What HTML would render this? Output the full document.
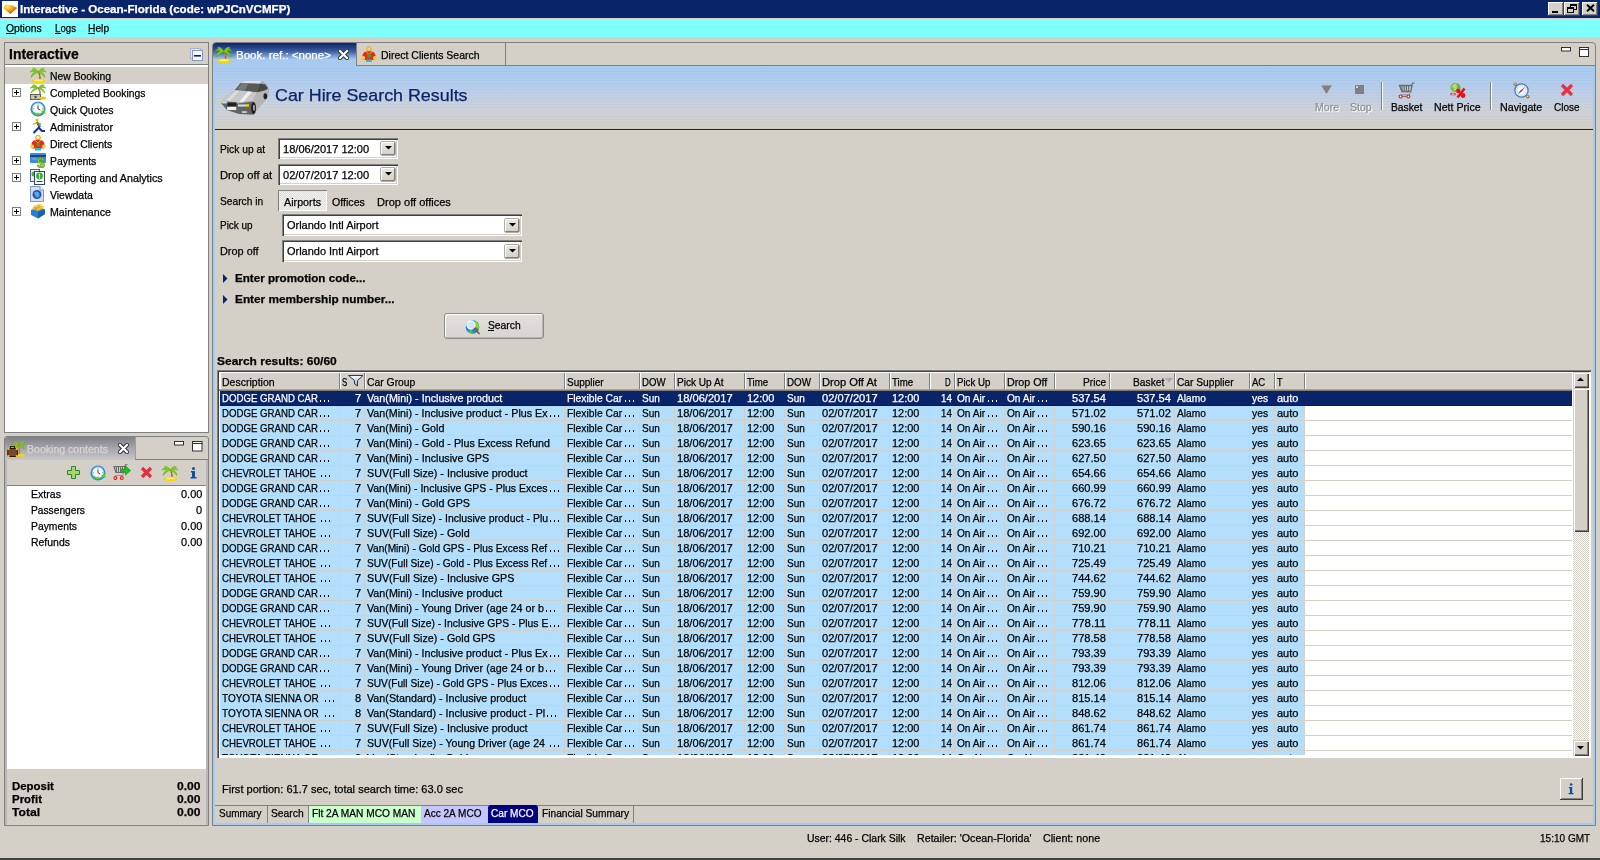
<!DOCTYPE html><html><head><meta charset="utf-8"><style>
*{margin:0;padding:0;box-sizing:border-box}
html,body{width:1600px;height:860px;overflow:hidden;background:#d4d0c8;font-family:"Liberation Sans",sans-serif;font-size:11px;color:#000;position:relative}
.a{position:absolute;white-space:nowrap;line-height:normal}
#root{position:absolute;left:0;top:0;width:1600px;height:860px;overflow:hidden;background:#d4d0c8;will-change:transform}
.a{-webkit-text-stroke:0.25px currentColor}
.raised{background:#d4d0c8;box-shadow:inset -1px -1px #404040,inset 1px 1px #fff,inset -2px -2px #808080}
.raised2{background:#d4d0c8;box-shadow:inset 1px 1px #d4d0c8,inset 2px 2px #fff,inset -1px -1px #404040,inset -2px -2px #808080}
.sunken{background:#fff;box-shadow:inset 1px 1px #808080,inset 2px 2px #404040,inset -1px -1px #fff,inset -2px -2px #d4d0c8}
</style></head><body><div id="root">
<div class="a " style="left:0px;top:0px;width:1600px;height:18px;background:#0a246a"></div>
<div class="a " style="left:0px;top:18px;width:1600px;height:1px;background:#d4d0c8"></div>
<div class="a " style="left:0px;top:19px;width:1600px;height:18px;background:#80ffff"></div>
<div class="a " style="left:2px;top:1px;width:16px;height:16px;background:#fff"></div>
<svg class="a" style="left:2px;top:1px" width="16" height="16" viewBox="0 0 16 16"><defs><radialGradient id="tg" cx="0.3" cy="0.25" r="0.85"><stop offset="0" stop-color="#ffe860"/><stop offset="0.45" stop-color="#f4a818"/><stop offset="1" stop-color="#b03c08"/></radialGradient></defs><path d="M1.3 7.2 L3.4 3.4 L10.5 4.6 L15.2 6.9 L8.4 12.9 Z" fill="url(#tg)"/></svg>
<div class="a" style="left:20.00px;top:3px;font-size:11px;font-weight:bold;color:#fff;transform:scaleX(1.0527);transform-origin:0 0;">Interactive - Ocean-Florida (code: wPJCnVCMFP)</div>
<div class="a raised" style="left:1548px;top:2px;width:16px;height:14px;"></div>
<div class="a raised" style="left:1564px;top:2px;width:16px;height:14px;"></div>
<div class="a raised" style="left:1582px;top:2px;width:16px;height:14px;"></div>
<div class="a " style="left:1552px;top:11px;width:6px;height:2px;background:#000"></div>
<svg class="a" style="left:1567px;top:4px" width="10" height="9" viewBox="0 0 10 9"><rect x="3.5" y="0.5" width="6" height="5" fill="none" stroke="#000"/><rect x="3" y="0" width="7" height="2" fill="#000"/><rect x="0.5" y="3.5" width="6" height="5" fill="#d4d0c8" stroke="#000"/><rect x="0" y="3" width="7" height="2" fill="#000"/></svg>
<svg class="a" style="left:1586px;top:4px" width="9" height="8" viewBox="0 0 9 8"><path d="M1 0.8 L8 7.2 M8 0.8 L1 7.2" stroke="#000" stroke-width="2"/></svg>
<div class="a" style="left:6.00px;top:22px;font-size:11px;transform:scaleX(0.9373);transform-origin:0 0;">Options</div>
<div class="a " style="left:6px;top:33px;width:8px;height:1px;background:#000"></div>
<div class="a" style="left:55.00px;top:22px;font-size:11px;transform:scaleX(0.8787);transform-origin:0 0;">Logs</div>
<div class="a " style="left:55px;top:33px;width:6px;height:1px;background:#000"></div>
<div class="a" style="left:88.00px;top:22px;font-size:11px;transform:scaleX(0.9331);transform-origin:0 0;">Help</div>
<div class="a " style="left:88px;top:33px;width:7px;height:1px;background:#000"></div>
<div class="a " style="left:4px;top:42px;width:205px;height:391px;background:#fff;border:1px solid #808080"></div>
<div class="a " style="left:5px;top:43px;width:203px;height:22px;background:#d4d0c8;border-bottom:1px solid #808080"></div>
<div class="a" style="left:9.00px;top:46px;font-size:14px;font-weight:bold;transform:scaleX(0.9965);transform-origin:0 0;">Interactive</div>
<svg class="a" style="left:190px;top:48px" width="14" height="13" viewBox="0 0 14 13"><rect x="0.5" y="0.5" width="10" height="10" fill="#dce8f4" stroke="#a8b8d0"/><rect x="2.5" y="2.5" width="10" height="10" fill="#f4f8fc" stroke="#8898b8"/><rect x="4" y="7" width="7" height="1.6" fill="#0a246a"/></svg>
<div class="a " style="left:5px;top:66px;width:203px;height:1px;background:#fff"></div>
<div class="a " style="left:5px;top:67px;width:203px;height:17px;background:#d4d0c8"></div>
<svg class="a" style="left:30px;top:67px" width="16" height="16" viewBox="0 0 16 16"><path d="M7.5 5 Q10 9 8.8 13.5 L10.6 13.5 Q11.6 9 9 5Z" fill="#c88020"/><path d="M9 7 L10 7.5 M9.3 10 L10.4 10.5" stroke="#704010" stroke-width="0.8"/><path d="M8 4.5 Q4 0.5 0 5 Q3 3.8 5 4.8 Q1.5 6.5 1 10.5 Q4.5 6.5 8 5.2Z" fill="#84d020" stroke="#58a818" stroke-width="0.5"/><path d="M8.5 4.5 Q12 0.5 16 5 Q13 3.8 11 4.8 Q14.5 6.5 15 10.5 Q11.5 6.5 8.5 5.2Z" fill="#84d020" stroke="#58a818" stroke-width="0.5"/><path d="M8.2 5 Q5 -0.5 2 2 Q5.5 2 8.2 5 Q11 2 14.5 2 Q11.5 -0.5 8.2 5Z" fill="#94dc28" stroke="#58a818" stroke-width="0.4"/><ellipse cx="8.5" cy="14" rx="7" ry="2" fill="#f8d400"/><ellipse cx="8.5" cy="13.4" rx="4.5" ry="0.9" fill="#fff070"/></svg>
<div class="a" style="left:49.70px;top:70px;font-size:11px;transform:scaleX(0.9429);transform-origin:0 0;">New Booking</div>
<div class="a " style="left:12px;top:88px;width:9px;height:9px;background:#fff;border:1px solid #808080"></div>
<div class="a " style="left:14px;top:92px;width:5px;height:1px;background:#000"></div>
<div class="a " style="left:16px;top:90px;width:1px;height:5px;background:#000"></div>
<svg class="a" style="left:30px;top:84px" width="16" height="16" viewBox="0 0 16 16"><path d="M7.5 4 Q10 7.5 9 11 L10.6 11 Q11.6 7.5 9 4Z" fill="#c88020"/><path d="M8 3.8 Q4 0 0 4.2 Q3 3.2 5 4 Q1.5 5.8 1 9 Q4.5 5.8 8 4.4Z" fill="#84d020" stroke="#58a818" stroke-width="0.5"/><path d="M8.5 3.8 Q12 0 16 4.2 Q13 3.2 11 4 Q14.5 5.8 15 9 Q11.5 5.8 8.5 4.4Z" fill="#84d020" stroke="#58a818" stroke-width="0.5"/><path d="M8.2 4 Q5 -1 2 1.5 Q5.5 1.5 8.2 4 Q11 1.5 14.5 1.5 Q11.5 -1 8.2 4Z" fill="#94dc28" stroke="#58a818" stroke-width="0.4"/><rect x="0.5" y="10.5" width="10" height="5" fill="#c8c8b0" stroke="#606050"/><circle cx="5.5" cy="13" r="1.3" fill="#505040"/><ellipse cx="12.5" cy="14" rx="3.5" ry="1.5" fill="#f0c800"/></svg>
<div class="a" style="left:49.70px;top:87px;font-size:11px;transform:scaleX(0.9411);transform-origin:0 0;">Completed Bookings</div>
<svg class="a" style="left:30px;top:101px" width="16" height="16" viewBox="0 0 16 16"><circle cx="8" cy="8" r="7.6" fill="#2a8ef0"/><circle cx="8" cy="7.6" r="5.6" fill="#f8f8f8" stroke="#b8c8d8" stroke-width="0.7"/><path d="M8 2.8 V3.8 M8 11.4 V12.4 M3 7.6 H4 M12 7.6 H13" stroke="#808080" stroke-width="0.8"/><path d="M8 4.5 V7.8 L10.3 9" stroke="#303030" stroke-width="0.9" fill="none"/><path d="M2.5 11.5 Q7 16.5 13.5 12 L15.5 13 L15 8.5 L11 10.5 L12.8 11.2 Q8 14 4.2 11Z" fill="#58c828"/></svg>
<div class="a" style="left:49.70px;top:104px;font-size:11px;transform:scaleX(0.9532);transform-origin:0 0;">Quick Quotes</div>
<div class="a " style="left:12px;top:122px;width:9px;height:9px;background:#fff;border:1px solid #808080"></div>
<div class="a " style="left:14px;top:126px;width:5px;height:1px;background:#000"></div>
<div class="a " style="left:16px;top:124px;width:1px;height:5px;background:#000"></div>
<svg class="a" style="left:30px;top:118px" width="16" height="16" viewBox="0 0 16 16"><circle cx="7" cy="2" r="1.6" fill="#f0c000"/><path d="M7 4 L9.5 8.5 L7.5 11 L3.5 15 M9 10 L12 13 L15 13" stroke="#1830a0" stroke-width="2" fill="none"/><path d="M6 4 L11 5.5 L10 9Z" fill="#60a040"/><path d="M3 6 L7 5" stroke="#f0b000" stroke-width="1.3"/></svg>
<div class="a" style="left:49.70px;top:121px;font-size:11px;transform:scaleX(0.9734);transform-origin:0 0;">Administrator</div>
<svg class="a" style="left:30px;top:135px" width="16" height="16" viewBox="0 0 16 16"><circle cx="8" cy="2.6" r="2.2" fill="none" stroke="#f0b820" stroke-width="1.4"/><path d="M1.5 9 Q2 4.8 8 4.8 Q14 4.8 14.5 9 L13.5 13.5 L2.5 13.5Z" fill="#f02818"/><path d="M5 5 L8 8 L11 5" fill="none" stroke="#f8a020" stroke-width="1"/><rect x="6.3" y="7.5" width="3.4" height="3.5" fill="#40a040"/><rect x="5" y="13" width="6" height="2.5" fill="#28c0c8"/><circle cx="2.2" cy="11.5" r="2" fill="#f8d030"/><circle cx="13.8" cy="11.5" r="2" fill="#f8d030"/></svg>
<div class="a" style="left:49.70px;top:138px;font-size:11px;transform:scaleX(0.9499);transform-origin:0 0;">Direct Clients</div>
<div class="a " style="left:12px;top:156px;width:9px;height:9px;background:#fff;border:1px solid #808080"></div>
<div class="a " style="left:14px;top:160px;width:5px;height:1px;background:#000"></div>
<div class="a " style="left:16px;top:158px;width:1px;height:5px;background:#000"></div>
<svg class="a" style="left:30px;top:152px" width="16" height="16" viewBox="0 0 16 16"><rect x="0" y="1" width="16" height="10" rx="1" fill="#3a8ee0"/><rect x="0" y="3" width="16" height="2" fill="#184880"/><path d="M2 7 H7" stroke="#80b8f0" stroke-width="1"/><text x="7" y="15.5" font-size="14" font-weight="bold" fill="#8cd420" stroke="#508010" stroke-width="0.4" font-family="Liberation Sans">$</text></svg>
<div class="a" style="left:49.70px;top:155px;font-size:11px;transform:scaleX(0.9472);transform-origin:0 0;">Payments</div>
<div class="a " style="left:12px;top:173px;width:9px;height:9px;background:#fff;border:1px solid #808080"></div>
<div class="a " style="left:14px;top:177px;width:5px;height:1px;background:#000"></div>
<div class="a " style="left:16px;top:175px;width:1px;height:5px;background:#000"></div>
<svg class="a" style="left:30px;top:169px" width="16" height="16" viewBox="0 0 16 16"><rect x="0.5" y="0.5" width="9" height="12" fill="#e8f0f8" stroke="#506070"/><circle cx="4" cy="5" r="2.5" fill="#40b040"/><rect x="4.5" y="2.5" width="10" height="13" fill="#f8fcff" stroke="#304858"/><circle cx="9.5" cy="7" r="3.4" fill="#30b030"/><path d="M9.5 4.8 V7.6" stroke="#fff" stroke-width="1.2"/><circle cx="9.5" cy="9" r="0.7" fill="#fff"/><rect x="6.5" y="12" width="6" height="1" fill="#603030"/></svg>
<div class="a" style="left:49.70px;top:172px;font-size:11px;transform:scaleX(0.9753);transform-origin:0 0;">Reporting and Analytics</div>
<svg class="a" style="left:30px;top:186px" width="16" height="16" viewBox="0 0 16 16"><path d="M0.5 0.5 H10 L13.5 4 V15.5 H0.5Z" fill="#d4e0f0" stroke="#8098b8"/><path d="M10 0.5 V4 H13.5" fill="#f8f8f8" stroke="#8098b8"/><circle cx="7" cy="8.5" r="4.5" fill="#4040c0"/><path d="M4 7 Q6 4.5 8 6 Q10 7 9.5 10 Q8 12.5 6 11 Q5 9 4 7Z" fill="#30b8e8"/><path d="M7 6 Q8 8 7 9" stroke="#50d070" stroke-width="1" fill="none"/></svg>
<div class="a" style="left:49.70px;top:189px;font-size:11px;transform:scaleX(0.9513);transform-origin:0 0;">Viewdata</div>
<div class="a " style="left:12px;top:207px;width:9px;height:9px;background:#fff;border:1px solid #808080"></div>
<div class="a " style="left:14px;top:211px;width:5px;height:1px;background:#000"></div>
<div class="a " style="left:16px;top:209px;width:1px;height:5px;background:#000"></div>
<svg class="a" style="left:30px;top:203px" width="16" height="16" viewBox="0 0 16 16"><path d="M1 7 L8 4.5 L15 6.5 L15 11 L8 15.5 L1 12Z" fill="#2880d0"/><path d="M8 9 L15 6.5 L15 11 L8 15.5Z" fill="#1860b0"/><path d="M1.5 6 L8.5 3 L14.5 5 L8 8Z" fill="#f0b020"/><path d="M2 4.5 L9 1.5 L14.5 3.5 L8 6.5Z" fill="#f8d040"/><path d="M2.5 3 L9 0.5 L14 2 L8 5Z" fill="#f8e070"/><path d="M4 5 L10 2.5 M5 6 L11 3.5" stroke="#c07010" stroke-width="0.6"/></svg>
<div class="a" style="left:49.70px;top:206px;font-size:11px;transform:scaleX(0.9671);transform-origin:0 0;">Maintenance</div>
<div class="a " style="left:4px;top:436px;width:205px;height:390px;background:#d4d0c8;border:1px solid #808080;border-radius:3px 3px 0 0"></div>
<div class="a " style="left:5px;top:437px;width:130px;height:23px;background:linear-gradient(#807e86,#a8a6ae 50%,#c8c6cc);border-radius:3px 0 0 0"></div>
<svg class="a" style="left:7px;top:439px" width="18" height="18" viewBox="0 0 18 18"><path d="M11 6 Q12.5 10 11.5 15 L13 15 Q14 10 12 6Z" fill="#c88020"/><path d="M11.5 5.5 Q8 1.5 4 5.5 Q7 4.5 9 5.5 Q6 7.5 5.5 10.5 Q9 7.5 11.5 6.2Z" fill="#84d020" stroke="#58a818" stroke-width="0.5"/><path d="M12 5.5 Q15 1.5 18 5.5 Q16 4.5 14 5.5 Q17 7.5 17.5 10.5 Q14.5 7.5 12 6.2Z" fill="#84d020" stroke="#58a818" stroke-width="0.5"/><path d="M11.8 6 Q9 0.5 6 3 Q9.5 3 11.8 6 Q14.5 3 18 3 Q15 0.5 11.8 6Z" fill="#94dc28" stroke="#58a818" stroke-width="0.4"/><ellipse cx="14" cy="16" rx="4" ry="1.6" fill="#f8d400"/><rect x="0.8" y="9.5" width="9.5" height="8" rx="1" fill="#7a4a30" stroke="#2a1808" stroke-width="1"/><rect x="3.5" y="7.5" width="4" height="2.2" fill="none" stroke="#2a1808" stroke-width="0.9"/><rect x="0.5" y="9" width="2" height="2" fill="#f0c000"/><rect x="8.8" y="9" width="2" height="2" fill="#f0c000"/><rect x="0.5" y="16" width="2" height="2" fill="#f0c000"/><rect x="8.8" y="16" width="2" height="2" fill="#f0c000"/></svg>
<div class="a" style="left:27.40px;top:443px;font-size:11px;color:#d8d4d0;transform:scaleX(0.9589);transform-origin:0 0;">Booking contents</div>
<svg class="a" style="left:118px;top:443px" width="11" height="11" viewBox="0 0 11 11"><path d="M2 2 L9 9 M9 2 L2 9" stroke="#303030" stroke-width="4.2" stroke-linecap="square"/><path d="M2 2 L9 9 M9 2 L2 9" stroke="#fff" stroke-width="2.2" stroke-linecap="square"/></svg>
<div class="a " style="left:135px;top:437px;width:1px;height:23px;background:#a0a0a0"></div>
<div class="a " style="left:135px;top:459px;width:73px;height:1px;background:#808080"></div>
<svg class="a" style="left:174px;top:441px" width="11" height="5" viewBox="0 0 11 5"><rect x="0.5" y="0.5" width="9" height="3.5" fill="#fff" stroke="#303030"/></svg>
<svg class="a" style="left:192px;top:441px" width="11" height="11" viewBox="0 0 11 11"><rect x="0.5" y="0.5" width="9.5" height="9.5" fill="#fff" stroke="#303030"/><rect x="0" y="2" width="10.5" height="1" fill="#303030"/></svg>
<div class="a " style="left:6px;top:460px;width:201px;height:25px;background:#d4d0c8"></div>
<svg class="a" style="left:67px;top:466px" width="13" height="13" viewBox="0 0 13 13"><path d="M4.5 0.5 H8.5 V4.5 H12.5 V8.5 H8.5 V12.5 H4.5 V8.5 H0.5 V4.5 H4.5Z" fill="#a8d860" stroke="#308040"/></svg>
<svg class="a" style="left:90px;top:465px" width="16" height="16" viewBox="0 0 16 16"><circle cx="8" cy="8" r="7.6" fill="#2a8ef0"/><circle cx="8" cy="7.6" r="5.6" fill="#f8f8f8" stroke="#b8c8d8" stroke-width="0.7"/><path d="M8 2.8 V3.8 M8 11.4 V12.4 M3 7.6 H4 M12 7.6 H13" stroke="#808080" stroke-width="0.8"/><path d="M8 4.5 V7.8 L10.3 9" stroke="#303030" stroke-width="0.9" fill="none"/><path d="M2.5 11.5 Q7 16.5 13.5 12 L15.5 13 L15 8.5 L11 10.5 L12.8 11.2 Q8 14 4.2 11Z" fill="#58c828"/></svg>
<svg class="a" style="left:113px;top:464px" width="18" height="17" viewBox="0 0 18 17"><path d="M1 2.5 H12 L11 8.5 H3 Z" fill="none" stroke="#6c6c6c" stroke-width="1.2"/><path d="M3.5 3 V8 M5.5 3 V8 M7.5 3 V8 M9.5 3 V8" stroke="#6c6c6c" stroke-width="1"/><path d="M12 2.5 L12.4 0.8 H14.5" fill="none" stroke="#6c6c6c" stroke-width="1.1"/><path d="M10.5 8.5 L9.8 11.5 H2.5" fill="none" stroke="#909090" stroke-width="0.9"/><circle cx="2.4" cy="14" r="1.4" fill="#fff" stroke="#e81010" stroke-width="1.1"/><circle cx="8.8" cy="14" r="1.4" fill="#fff" stroke="#e81010" stroke-width="1.1"/><path d="M8.5 5 H12.5 V2 L17.5 6.5 L12.5 11 V8 H8.5Z" fill="#18c818" stroke="#0a8a0a" stroke-width="0.6"/></svg>
<svg class="a" style="left:140px;top:466px" width="13" height="13" viewBox="0 0 13 13"><path d="M2 2 L11 11 M11 2 L2 11" stroke="#e03040" stroke-width="3.2"/></svg>
<svg class="a" style="left:162px;top:465px" width="17" height="16" viewBox="0 0 17 16"><path d="M7.5 5 Q10 9 8.8 13.5 L10.6 13.5 Q11.6 9 9 5Z" fill="#c88020"/><path d="M9 7 L10 7.5 M9.3 10 L10.4 10.5" stroke="#704010" stroke-width="0.8"/><path d="M8 4.5 Q4 0.5 0 5 Q3 3.8 5 4.8 Q1.5 6.5 1 10.5 Q4.5 6.5 8 5.2Z" fill="#84d020" stroke="#58a818" stroke-width="0.5"/><path d="M8.5 4.5 Q12 0.5 16 5 Q13 3.8 11 4.8 Q14.5 6.5 15 10.5 Q11.5 6.5 8.5 5.2Z" fill="#84d020" stroke="#58a818" stroke-width="0.5"/><path d="M8.2 5 Q5 -0.5 2 2 Q5.5 2 8.2 5 Q11 2 14.5 2 Q11.5 -0.5 8.2 5Z" fill="#94dc28" stroke="#58a818" stroke-width="0.4"/><ellipse cx="8.5" cy="14" rx="7" ry="2" fill="#f8d400"/><ellipse cx="8.5" cy="13.4" rx="4.5" ry="0.9" fill="#fff070"/></svg>
<svg class="a" style="left:190px;top:467px" width="7" height="12" viewBox="0 0 7 12"><circle cx="3.5" cy="1.5" r="1.5" fill="#1050a0"/><path d="M1 4 H5 V10 H6.5 V11.5 H0.5 V10 H2 V5.5 H1Z" fill="#1050a0"/></svg>
<div class="a " style="left:5px;top:460px;width:2px;height:365px;background:#b8b8b8"></div>
<div class="a " style="left:7px;top:485px;width:199px;height:1px;background:#808080"></div>
<div class="a " style="left:7px;top:486px;width:199px;height:283px;background:#fff"></div>
<div class="a" style="left:30.60px;top:488px;font-size:11px;transform:scaleX(0.9598);transform-origin:0 0;">Extras</div>
<div class="a" style="left:180.80px;top:488px;font-size:11px;transform:scaleX(0.9957);transform-origin:0 0;">0.00</div>
<div class="a" style="left:30.60px;top:504px;font-size:11px;transform:scaleX(0.9285);transform-origin:0 0;">Passengers</div>
<div class="a" style="left:196.00px;top:504px;font-size:11px;">0</div>
<div class="a" style="left:30.60px;top:520px;font-size:11px;transform:scaleX(0.9391);transform-origin:0 0;">Payments</div>
<div class="a" style="left:180.80px;top:520px;font-size:11px;transform:scaleX(0.9957);transform-origin:0 0;">0.00</div>
<div class="a" style="left:30.60px;top:536px;font-size:11px;transform:scaleX(0.9501);transform-origin:0 0;">Refunds</div>
<div class="a" style="left:180.80px;top:536px;font-size:11px;transform:scaleX(0.9957);transform-origin:0 0;">0.00</div>
<div class="a" style="left:11.70px;top:780px;font-size:11px;font-weight:bold;transform:scaleX(1.0375);transform-origin:0 0;">Deposit</div>
<div class="a" style="left:176.70px;top:780px;font-size:11px;font-weight:bold;transform:scaleX(1.0943);transform-origin:0 0;">0.00</div>
<div class="a" style="left:11.70px;top:793px;font-size:11px;font-weight:bold;transform:scaleX(1.0428);transform-origin:0 0;">Profit</div>
<div class="a" style="left:176.70px;top:793px;font-size:11px;font-weight:bold;transform:scaleX(1.0943);transform-origin:0 0;">0.00</div>
<div class="a" style="left:11.70px;top:806px;font-size:11px;font-weight:bold;transform:scaleX(1.1022);transform-origin:0 0;">Total</div>
<div class="a" style="left:176.70px;top:806px;font-size:11px;font-weight:bold;transform:scaleX(1.0943);transform-origin:0 0;">0.00</div>
<div class="a " style="left:206px;top:460px;width:2px;height:365px;background:#b8b8b8"></div>
<div class="a " style="left:212px;top:42px;width:1384px;height:784px;background:#d4d0c8;border:1px solid #808080;border-radius:4px 4px 0 0"></div>
<div class="a " style="left:213px;top:66px;width:2px;height:759px;background:#a6caf0"></div>
<div class="a " style="left:1593px;top:66px;width:2px;height:759px;background:#a6caf0"></div>
<div class="a " style="left:213px;top:823px;width:1382px;height:2px;background:#a6caf0"></div>
<div class="a " style="left:213px;top:43px;width:143px;height:23px;background:linear-gradient(#0a246a 0%,#3a5aa0 35%,#a6caf0 72%,#a6caf0 100%);border-radius:3px 0 0 0"></div>
<svg class="a" style="left:215px;top:46px" width="17" height="17" viewBox="0 0 16 16"><path d="M7.5 5 Q10 9 8.8 13.5 L10.6 13.5 Q11.6 9 9 5Z" fill="#c88020"/><path d="M9 7 L10 7.5 M9.3 10 L10.4 10.5" stroke="#704010" stroke-width="0.8"/><path d="M8 4.5 Q4 0.5 0 5 Q3 3.8 5 4.8 Q1.5 6.5 1 10.5 Q4.5 6.5 8 5.2Z" fill="#84d020" stroke="#58a818" stroke-width="0.5"/><path d="M8.5 4.5 Q12 0.5 16 5 Q13 3.8 11 4.8 Q14.5 6.5 15 10.5 Q11.5 6.5 8.5 5.2Z" fill="#84d020" stroke="#58a818" stroke-width="0.5"/><path d="M8.2 5 Q5 -0.5 2 2 Q5.5 2 8.2 5 Q11 2 14.5 2 Q11.5 -0.5 8.2 5Z" fill="#94dc28" stroke="#58a818" stroke-width="0.4"/><ellipse cx="8.5" cy="14" rx="7" ry="2" fill="#f8d400"/><ellipse cx="8.5" cy="13.4" rx="4.5" ry="0.9" fill="#fff070"/></svg>
<div class="a" style="left:235.50px;top:49px;font-size:11px;color:#fff;transform:scaleX(1.0490);transform-origin:0 0;">Book. ref.: &lt;none&gt;</div>
<svg class="a" style="left:338px;top:49px" width="11" height="11" viewBox="0 0 11 11"><path d="M2 2 L9 9 M9 2 L2 9" stroke="#303030" stroke-width="4.2" stroke-linecap="square"/><path d="M2 2 L9 9 M9 2 L2 9" stroke="#fff" stroke-width="2.2" stroke-linecap="square"/></svg>
<div class="a " style="left:356px;top:43px;width:1px;height:22px;background:#808080"></div>
<div class="a " style="left:505px;top:43px;width:1px;height:22px;background:#808080"></div>
<svg class="a" style="left:361px;top:46px" width="16" height="17" viewBox="0 0 16 16"><circle cx="8" cy="2.6" r="2.2" fill="none" stroke="#f0b820" stroke-width="1.4"/><path d="M1.5 9 Q2 4.8 8 4.8 Q14 4.8 14.5 9 L13.5 13.5 L2.5 13.5Z" fill="#f02818"/><path d="M5 5 L8 8 L11 5" fill="none" stroke="#f8a020" stroke-width="1"/><rect x="6.3" y="7.5" width="3.4" height="3.5" fill="#40a040"/><rect x="5" y="13" width="6" height="2.5" fill="#28c0c8"/><circle cx="2.2" cy="11.5" r="2" fill="#f8d030"/><circle cx="13.8" cy="11.5" r="2" fill="#f8d030"/></svg>
<div class="a" style="left:380.50px;top:49px;font-size:11px;transform:scaleX(0.9545);transform-origin:0 0;">Direct Clients Search</div>
<div class="a " style="left:356px;top:65px;width:1239px;height:1px;background:#808080"></div>
<svg class="a" style="left:1561px;top:47px" width="10" height="5" viewBox="0 0 10 5"><rect x="0.5" y="0.5" width="9" height="3.5" fill="#fff" stroke="#303030"/></svg>
<svg class="a" style="left:1579px;top:47px" width="10" height="10" viewBox="0 0 10 10"><rect x="0.5" y="0.5" width="9" height="9" fill="#fff" stroke="#303030"/><rect x="0" y="2" width="10" height="1" fill="#303030"/></svg>
<div class="a " style="left:215px;top:66px;width:1378px;height:63px;background:repeating-linear-gradient(rgba(255,255,255,0) 0px,rgba(255,255,255,0) 2px,rgba(90,90,110,0.045) 2px,rgba(90,90,110,0.045) 3px),linear-gradient(#a6caf0 0%,#b4cdee 30%,#ccd2dc 65%,#d4d0c8 100%)"></div>
<div class="a " style="left:215px;top:129px;width:1378px;height:1px;background:#0a246a"></div>
<svg class="a" style="left:221px;top:79px" width="48" height="37" viewBox="0 0 48 37">
<path d="M0 24 L2 20 L14 11 L19 4 L23 2 L41 2 L45 5 L48 10 L47 18 L44 22 L36 30 L33 36 L18 35 L6 31 Z" fill="#a8a8a8"/>
<path d="M19.5 4.2 L23 2 L41 2 L38 4.7 Z" fill="#e0e0e0"/>
<path d="M14 11 L19.5 4.2 L38 4.7 L36 13.4 Z" fill="#585858"/>
<path d="M16 10 L20 5 L27 5 L24 12 Z" fill="#787878"/>
<path d="M38 4.7 L44 5.2 L47 9 L44 12 L36 13.4 Z" fill="#484848"/>
<path d="M1 21 L14 11 L36 13.4 L32 22 L17.5 23.6 Z" fill="#c8c8c8"/>
<path d="M18 23 L27 12.6 L31 13 L22 23.2 Z" fill="#f0f0f0"/>
<path d="M5 21 L15 12 L18 12.3 L9 22 Z" fill="#dcdcdc"/>
<path d="M36 13.4 L47.7 10.3 L45.6 19.3 L33 35 L32 22 Z" fill="#b4b4b4"/>
<path d="M0 24 L17.5 24.5 L32 22.5 L33 35.5 L18 35 L6 31 Z" fill="#646464"/>
<rect x="6.5" y="23.4" width="9" height="3.6" fill="#202020"/>
<rect x="1" y="21.5" width="4.5" height="3" fill="#b8d8f0"/><rect x="1" y="21.5" width="1.5" height="2" fill="#e8d020"/>
<rect x="17" y="25.5" width="8" height="2" fill="#c8e4f8"/><rect x="25" y="25.2" width="3" height="2.4" fill="#f0d800"/>
<rect x="6.2" y="28" width="9" height="3" fill="#f0f0f0"/>
<rect x="21" y="32.4" width="4.7" height="1.3" fill="#f8f8f8"/>
<ellipse cx="32.6" cy="29" rx="2.4" ry="6" fill="#1c1c1c"/><ellipse cx="33" cy="29" rx="1.1" ry="3.2" fill="#a0a0a0"/>
<ellipse cx="44.3" cy="17.2" rx="1.8" ry="3" fill="#202020"/>
</svg>
<div class="a" style="left:275.00px;top:86px;font-size:17px;color:#0a246a;transform:scaleX(1.0504);transform-origin:0 0;">Car Hire Search Results</div>
<svg class="a" style="left:1320px;top:84px" width="13" height="11" viewBox="0 0 13 11"><path d="M1 1 H12 L6.5 10Z" fill="#808080"/><path d="M1 1 H12" stroke="#c0c0c0"/></svg>
<svg class="a" style="left:1355px;top:85px" width="9" height="9" viewBox="0 0 9 9"><rect x="0" y="0" width="9" height="9" fill="#808080"/><rect x="1" y="1" width="2" height="2" fill="#d0d0d0"/></svg>
<div class="a" style="left:1315.60px;top:102px;font-size:11px;color:#fff;transform:scaleX(0.9622);transform-origin:0 0;">More</div>
<div class="a" style="left:1314.60px;top:101px;font-size:11px;color:#909090;transform:scaleX(0.9622);transform-origin:0 0;">More</div>
<div class="a" style="left:1350.70px;top:102px;font-size:11px;color:#fff;transform:scaleX(0.9595);transform-origin:0 0;">Stop</div>
<div class="a" style="left:1349.70px;top:101px;font-size:11px;color:#909090;transform:scaleX(0.9595);transform-origin:0 0;">Stop</div>
<div class="a" style="left:1390.60px;top:101px;font-size:11px;transform:scaleX(0.9353);transform-origin:0 0;">Basket</div>
<div class="a" style="left:1433.60px;top:101px;font-size:11px;transform:scaleX(0.9653);transform-origin:0 0;">Nett Price</div>
<div class="a" style="left:1499.80px;top:101px;font-size:11px;transform:scaleX(0.9747);transform-origin:0 0;">Navigate</div>
<div class="a" style="left:1553.80px;top:101px;font-size:11px;transform:scaleX(0.9070);transform-origin:0 0;">Close</div>
<div class="a " style="left:1381px;top:82px;width:1px;height:28px;background:#808080"></div>
<div class="a " style="left:1382px;top:82px;width:1px;height:28px;background:#fff"></div>
<svg class="a" style="left:1398px;top:82px" width="17" height="17" viewBox="0 0 17 17"><path d="M1.5 3.5 H14 L12.8 9.5 H4 Z" fill="none" stroke="#6c6c6c" stroke-width="1.3"/><path d="M4 4 V9 M6.2 4 V9 M8.4 4 V9 M10.6 4 V9" stroke="#6c6c6c" stroke-width="1.1"/><path d="M13.8 3.5 L14.3 1 H16.5" fill="none" stroke="#6c6c6c" stroke-width="1.2"/><path d="M12.5 9.5 L11.5 12.8 H3" fill="none" stroke="#909090" stroke-width="0.9"/><path d="M3 14.5 H10" stroke="#606060" stroke-width="0.8"/><circle cx="2.6" cy="14.5" r="1.5" fill="#fff" stroke="#e81010" stroke-width="1.1"/><circle cx="10.4" cy="14.5" r="1.5" fill="#fff" stroke="#e81010" stroke-width="1.1"/></svg>
<svg class="a" style="left:1449px;top:82px" width="18" height="17" viewBox="0 0 18 17"><ellipse cx="6.5" cy="5.5" rx="5" ry="4.6" fill="#70b030"/><ellipse cx="5.5" cy="4.5" rx="3" ry="2.2" fill="#a0d060"/><path d="M7.5 2 Q4.5 2 5 4 Q8 5.5 7 7.5 Q5 8.5 4 7.5" fill="none" stroke="#c8f0a0" stroke-width="1"/><circle cx="9.3" cy="9" r="2.2" fill="#e81018"/><circle cx="14" cy="13.5" r="2.4" fill="#e81018"/><path d="M15.5 6.5 L8.5 15.5" stroke="#e81018" stroke-width="2.6"/><rect x="1.5" y="11" width="5" height="2.2" fill="#e81018"/><rect x="2.5" y="11.6" width="3" height="1" fill="#fff"/></svg>
<div class="a " style="left:1490px;top:82px;width:1px;height:28px;background:#808080"></div>
<div class="a " style="left:1491px;top:82px;width:1px;height:28px;background:#fff"></div>
<svg class="a" style="left:1513px;top:82px" width="17" height="17" viewBox="0 0 17 17"><circle cx="8.5" cy="8.5" r="6.6" fill="#f4f8fc" stroke="#4c7cb0" stroke-width="1.3"/><circle cx="8.5" cy="8.5" r="4.8" fill="none" stroke="#b8d0e8" stroke-width="0.8"/><path d="M5 12 L8 8 L12.3 4.8 L9 9Z" fill="#e82020"/><path d="M5 12 L8 8 L9 9Z" fill="#2858c0"/><circle cx="2.2" cy="2.2" r="1.8" fill="#a07838"/><circle cx="14.8" cy="14.8" r="1.8" fill="#a07838"/><circle cx="2" cy="2" r="0.8" fill="#f0d8a0"/><circle cx="14.6" cy="14.6" r="0.8" fill="#f0d8a0"/></svg>
<svg class="a" style="left:1560px;top:83px" width="14" height="14" viewBox="0 0 14 14"><path d="M2 2 L12 12 M12 2 L2 12" stroke="#e83040" stroke-width="3.2"/></svg>
<div class="a" style="left:220.00px;top:143px;font-size:11px;transform:scaleX(0.9327);transform-origin:0 0;">Pick up at</div>
<div class="a" style="left:220.00px;top:169px;font-size:11px;transform:scaleX(1.0175);transform-origin:0 0;">Drop off at</div>
<div class="a" style="left:220.00px;top:195px;font-size:11px;transform:scaleX(0.9277);transform-origin:0 0;">Search in</div>
<div class="a" style="left:219.70px;top:219px;font-size:11px;transform:scaleX(0.9039);transform-origin:0 0;">Pick up</div>
<div class="a" style="left:219.70px;top:245px;font-size:11px;transform:scaleX(0.9906);transform-origin:0 0;">Drop off</div>
<div class="a sunken" style="left:278px;top:138px;width:120px;height:21px;"></div>
<div class="a" style="left:283.00px;top:143px;font-size:11px;transform:scaleX(1.0056);transform-origin:0 0;">18/06/2017 12:00</div>
<div class="a " style="left:380px;top:141px;width:16px;height:15px;border-radius:2px;background:linear-gradient(#ece9e4,#d4d0c8);box-shadow:inset -1px -1px #808080,inset 1px 1px #fff;border:1px solid #b0aca8"></div>
<svg class="a" style="left:385px;top:146px" width="7" height="4" viewBox="0 0 7 4"><path d="M0 0 H7 L3.5 3.5Z" fill="#000"/></svg>
<div class="a sunken" style="left:278px;top:164px;width:120px;height:21px;"></div>
<div class="a" style="left:283.00px;top:169px;font-size:11px;transform:scaleX(1.0056);transform-origin:0 0;">02/07/2017 12:00</div>
<div class="a " style="left:380px;top:167px;width:16px;height:15px;border-radius:2px;background:linear-gradient(#ece9e4,#d4d0c8);box-shadow:inset -1px -1px #808080,inset 1px 1px #fff;border:1px solid #b0aca8"></div>
<svg class="a" style="left:385px;top:172px" width="7" height="4" viewBox="0 0 7 4"><path d="M0 0 H7 L3.5 3.5Z" fill="#000"/></svg>
<div class="a " style="left:278px;top:190px;width:49px;height:21px;background:repeating-conic-gradient(#e0ded8 0 25%,#f4f2ee 0 50%) 0 0/2px 2px;box-shadow:inset 1px 1px #808080,inset -1px -1px #fff"></div>
<div class="a" style="left:283.70px;top:196px;font-size:11px;transform:scaleX(0.9766);transform-origin:0 0;">Airports</div>
<div class="a" style="left:331.70px;top:196px;font-size:11px;transform:scaleX(0.9672);transform-origin:0 0;">Offices</div>
<div class="a" style="left:376.50px;top:196px;font-size:11px;transform:scaleX(1.0043);transform-origin:0 0;">Drop off offices</div>
<div class="a sunken" style="left:282px;top:214px;width:240px;height:22px;"></div>
<div class="a" style="left:287.00px;top:219px;font-size:11px;transform:scaleX(0.9972);transform-origin:0 0;">Orlando Intl Airport</div>
<div class="a " style="left:504px;top:218px;width:16px;height:15px;border-radius:2px;background:linear-gradient(#ece9e4,#d4d0c8);box-shadow:inset -1px -1px #808080,inset 1px 1px #fff;border:1px solid #b0aca8"></div>
<svg class="a" style="left:509px;top:223px" width="7" height="4" viewBox="0 0 7 4"><path d="M0 0 H7 L3.5 3.5Z" fill="#000"/></svg>
<div class="a sunken" style="left:282px;top:240px;width:240px;height:22px;"></div>
<div class="a" style="left:287.00px;top:245px;font-size:11px;transform:scaleX(0.9972);transform-origin:0 0;">Orlando Intl Airport</div>
<div class="a " style="left:504px;top:244px;width:16px;height:15px;border-radius:2px;background:linear-gradient(#ece9e4,#d4d0c8);box-shadow:inset -1px -1px #808080,inset 1px 1px #fff;border:1px solid #b0aca8"></div>
<svg class="a" style="left:509px;top:249px" width="7" height="4" viewBox="0 0 7 4"><path d="M0 0 H7 L3.5 3.5Z" fill="#000"/></svg>
<svg class="a" style="left:223px;top:274px" width="5" height="9" viewBox="0 0 5 9"><path d="M0 0 L4.5 4.5 L0 9Z" fill="#0a246a"/></svg>
<div class="a" style="left:234.50px;top:272px;font-size:11px;font-weight:bold;transform:scaleX(1.0576);transform-origin:0 0;">Enter promotion code...</div>
<svg class="a" style="left:223px;top:295px" width="5" height="9" viewBox="0 0 5 9"><path d="M0 0 L4.5 4.5 L0 9Z" fill="#0a246a"/></svg>
<div class="a" style="left:234.50px;top:293px;font-size:11px;font-weight:bold;transform:scaleX(1.0742);transform-origin:0 0;">Enter membership number...</div>
<div class="a " style="left:444px;top:313px;width:100px;height:26px;background:linear-gradient(#e4e0dc,#d8d4d0);border:1px solid #8c8a88;border-radius:3px;box-shadow:inset 1px 1px #fff,inset -1px -1px #b8b4b0"></div>
<svg class="a" style="left:465px;top:319px" width="16" height="16" viewBox="0 0 16 16"><circle cx="7.5" cy="8" r="6.8" fill="#1888e8"/><path d="M10 2 Q15 5 14 10 L10 8Z" fill="#90d820"/><path d="M3 12 Q5 15 8 14 L7 11Z" fill="#60c020"/><circle cx="6" cy="6" r="4" fill="#c8e8f8" stroke="#f8f8f8" stroke-width="1.3"/><path d="M9 9 L14.5 15" stroke="#a05020" stroke-width="1.7"/></svg>
<div class="a" style="left:487.80px;top:319px;font-size:11px;transform:scaleX(0.9356);transform-origin:0 0;">Search</div>
<div class="a " style="left:488px;top:330px;width:6px;height:1px;background:#000"></div>
<div class="a" style="left:217.00px;top:355px;font-size:11px;font-weight:bold;transform:scaleX(1.0878);transform-origin:0 0;">Search results: 60/60</div>
<div class="a " style="left:217px;top:370px;width:1374px;height:388px;background:#fff;box-shadow:inset 1px 1px #808080,inset 2px 2px #404040"></div>
<div class="a" style="left:219px;top:372px;width:1353px;height:383px;overflow:hidden">
<div class="a" style="left:0px;top:0px;width:1353px;height:19px;background:#d4d0c8;box-shadow:inset 0 1px #fff"></div>
<div class="a" style="left:1px;top:1px;width:119px;height:16px;border-left:1px solid #fff"></div>
<div class="a" style="left:120px;top:1px;width:1px;height:17px;background:#808080"></div>
<div class="a" style="left:3.00px;top:4px;font-size:11px;transform:scaleX(0.9562);transform-origin:0 0;">Description</div>
<div class="a" style="left:121px;top:1px;width:24px;height:16px;border-left:1px solid #fff"></div>
<div class="a" style="left:145px;top:1px;width:1px;height:17px;background:#808080"></div>
<div class="a" style="left:122.50px;top:4px;font-size:11px;transform:scaleX(0.7143);transform-origin:0 0;">S</div>
<div class="a" style="left:146px;top:1px;width:199px;height:16px;border-left:1px solid #fff"></div>
<div class="a" style="left:345px;top:1px;width:1px;height:17px;background:#808080"></div>
<div class="a" style="left:148.00px;top:4px;font-size:11px;transform:scaleX(0.9417);transform-origin:0 0;">Car Group</div>
<div class="a" style="left:346px;top:1px;width:74px;height:16px;border-left:1px solid #fff"></div>
<div class="a" style="left:420px;top:1px;width:1px;height:17px;background:#808080"></div>
<div class="a" style="left:348.00px;top:4px;font-size:11px;transform:scaleX(0.9092);transform-origin:0 0;">Supplier</div>
<div class="a" style="left:421px;top:1px;width:34px;height:16px;border-left:1px solid #fff"></div>
<div class="a" style="left:455px;top:1px;width:1px;height:17px;background:#808080"></div>
<div class="a" style="left:423.00px;top:4px;font-size:11px;transform:scaleX(0.8727);transform-origin:0 0;">DOW</div>
<div class="a" style="left:456px;top:1px;width:69px;height:16px;border-left:1px solid #fff"></div>
<div class="a" style="left:525px;top:1px;width:1px;height:17px;background:#808080"></div>
<div class="a" style="left:458.00px;top:4px;font-size:11px;transform:scaleX(0.9163);transform-origin:0 0;">Pick Up At</div>
<div class="a" style="left:526px;top:1px;width:39px;height:16px;border-left:1px solid #fff"></div>
<div class="a" style="left:565px;top:1px;width:1px;height:17px;background:#808080"></div>
<div class="a" style="left:528.00px;top:4px;font-size:11px;transform:scaleX(0.8780);transform-origin:0 0;">Time</div>
<div class="a" style="left:566px;top:1px;width:34px;height:16px;border-left:1px solid #fff"></div>
<div class="a" style="left:600px;top:1px;width:1px;height:17px;background:#808080"></div>
<div class="a" style="left:568.00px;top:4px;font-size:11px;transform:scaleX(0.8909);transform-origin:0 0;">DOW</div>
<div class="a" style="left:601px;top:1px;width:69px;height:16px;border-left:1px solid #fff"></div>
<div class="a" style="left:670px;top:1px;width:1px;height:17px;background:#808080"></div>
<div class="a" style="left:603.00px;top:4px;font-size:11px;transform:scaleX(1.0135);transform-origin:0 0;">Drop Off At</div>
<div class="a" style="left:671px;top:1px;width:39px;height:16px;border-left:1px solid #fff"></div>
<div class="a" style="left:710px;top:1px;width:1px;height:17px;background:#808080"></div>
<div class="a" style="left:673.00px;top:4px;font-size:11px;transform:scaleX(0.8780);transform-origin:0 0;">Time</div>
<div class="a" style="left:711px;top:1px;width:24px;height:16px;border-left:1px solid #fff"></div>
<div class="a" style="left:735px;top:1px;width:1px;height:17px;background:#808080"></div>
<div class="a" style="left:726.25px;top:4px;font-size:11px;transform:scaleX(0.7188);transform-origin:0 0;">D</div>
<div class="a" style="left:736px;top:1px;width:49px;height:16px;border-left:1px solid #fff"></div>
<div class="a" style="left:785px;top:1px;width:1px;height:17px;background:#808080"></div>
<div class="a" style="left:738.00px;top:4px;font-size:11px;transform:scaleX(0.8801);transform-origin:0 0;">Pick Up</div>
<div class="a" style="left:786px;top:1px;width:49px;height:16px;border-left:1px solid #fff"></div>
<div class="a" style="left:835px;top:1px;width:1px;height:17px;background:#808080"></div>
<div class="a" style="left:788.00px;top:4px;font-size:11px;transform:scaleX(0.9749);transform-origin:0 0;">Drop Off</div>
<div class="a" style="left:836px;top:1px;width:54px;height:16px;border-left:1px solid #fff"></div>
<div class="a" style="left:890px;top:1px;width:1px;height:17px;background:#808080"></div>
<div class="a" style="left:864.00px;top:4px;font-size:11px;transform:scaleX(0.9221);transform-origin:0 0;">Price</div>
<div class="a" style="left:891px;top:1px;width:64px;height:16px;border-left:1px solid #fff"></div>
<div class="a" style="left:955px;top:1px;width:1px;height:17px;background:#808080"></div>
<div class="a" style="left:913.50px;top:4px;font-size:11px;transform:scaleX(0.9308);transform-origin:0 0;">Basket</div>
<div class="a" style="left:956px;top:1px;width:74px;height:16px;border-left:1px solid #fff"></div>
<div class="a" style="left:1030px;top:1px;width:1px;height:17px;background:#808080"></div>
<div class="a" style="left:958.00px;top:4px;font-size:11px;transform:scaleX(0.9272);transform-origin:0 0;">Car Supplier</div>
<div class="a" style="left:1031px;top:1px;width:24px;height:16px;border-left:1px solid #fff"></div>
<div class="a" style="left:1055px;top:1px;width:1px;height:17px;background:#808080"></div>
<div class="a" style="left:1033.00px;top:4px;font-size:11px;transform:scaleX(0.8639);transform-origin:0 0;">AC</div>
<div class="a" style="left:1056px;top:1px;width:29px;height:16px;border-left:1px solid #fff"></div>
<div class="a" style="left:1085px;top:1px;width:1px;height:17px;background:#808080"></div>
<div class="a" style="left:1058.00px;top:4px;font-size:11px;transform:scaleX(0.8214);transform-origin:0 0;">T</div>
<div class="a" style="left:1086px;top:1px;width:1px;height:16px;background:#fff"></div>
<div class="a" style="left:0px;top:1px;width:1px;height:17px;background:#fff"></div>
<div class="a" style="left:0px;top:17px;width:1353px;height:1px;background:#a8a49c"></div>
<div class="a" style="left:0px;top:18px;width:1353px;height:1px;background:#807c74"></div>
<svg class="a" style="left:129px;top:3px" width="16" height="12"><defs><linearGradient id="fg" x1="0" y1="0" x2="0" y2="1"><stop offset="0" stop-color="#f8fcff"/><stop offset="1" stop-color="#98b0d0"/></linearGradient></defs><path d="M0.5 0.5 H15 L9.5 5.5 V11 L6.5 9 V5.5Z" fill="url(#fg)" stroke="#30384c"/></svg>
<svg class="a" style="left:946px;top:6px" width="8" height="5"><path d="M0 0 H8 L4 4.5Z" fill="#a8a8a8"/></svg>
<div class="a" style="left:1px;top:19px;width:1352px;height:14px;background:#0a246a"></div>
<div class="a" style="left:1px;top:33px;width:1352px;height:1px;background:#061a50"></div>
<div class="a" style="left:3.00px;top:20px;font-size:11px;color:#fff;transform:scaleX(0.8771);transform-origin:0 0;">DODGE GRAND CAR</div>
<div class="a" style="left:101px;top:28px;width:9px;height:2px;background:repeating-linear-gradient(90deg,#fff 0 1px,transparent 1px 4px)"></div>
<div class="a" style="left:136.00px;top:20px;font-size:11px;color:#fff;">7</div>
<div class="a" style="left:148.00px;top:20px;font-size:11px;color:#fff;transform:scaleX(0.9760);transform-origin:0 0;">Van(Mini) - Inclusive product</div>
<div class="a" style="left:348.00px;top:20px;font-size:11px;color:#fff;transform:scaleX(0.9403);transform-origin:0 0;">Flexible Car</div>
<div class="a" style="left:406px;top:28px;width:9px;height:2px;background:repeating-linear-gradient(90deg,#fff 0 1px,transparent 1px 4px)"></div>
<div class="a" style="left:423.00px;top:20px;font-size:11px;color:#fff;transform:scaleX(0.9124);transform-origin:0 0;">Sun</div>
<div class="a" style="left:458.00px;top:20px;font-size:11px;color:#fff;transform:scaleX(1.0103);transform-origin:0 0;">18/06/2017</div>
<div class="a" style="left:528.00px;top:20px;font-size:11px;color:#fff;transform:scaleX(0.9942);transform-origin:0 0;">12:00</div>
<div class="a" style="left:568.00px;top:20px;font-size:11px;color:#fff;transform:scaleX(0.9124);transform-origin:0 0;">Sun</div>
<div class="a" style="left:602.50px;top:20px;font-size:11px;color:#fff;transform:scaleX(1.0103);transform-origin:0 0;">02/07/2017</div>
<div class="a" style="left:673.00px;top:20px;font-size:11px;color:#fff;transform:scaleX(0.9942);transform-origin:0 0;">12:00</div>
<div class="a" style="left:721.50px;top:20px;font-size:11px;color:#fff;transform:scaleX(0.8871);transform-origin:0 0;">14</div>
<div class="a" style="left:738.00px;top:20px;font-size:11px;color:#fff;transform:scaleX(0.9203);transform-origin:0 0;">On Air</div>
<div class="a" style="left:769px;top:28px;width:9px;height:2px;background:repeating-linear-gradient(90deg,#fff 0 1px,transparent 1px 4px)"></div>
<div class="a" style="left:788.00px;top:20px;font-size:11px;color:#fff;transform:scaleX(0.9203);transform-origin:0 0;">On Air</div>
<div class="a" style="left:819px;top:28px;width:9px;height:2px;background:repeating-linear-gradient(90deg,#fff 0 1px,transparent 1px 4px)"></div>
<div class="a" style="left:853.25px;top:20px;font-size:11px;color:#fff;transform:scaleX(1.0067);transform-origin:0 0;">537.54</div>
<div class="a" style="left:918.25px;top:20px;font-size:11px;color:#fff;transform:scaleX(1.0067);transform-origin:0 0;">537.54</div>
<div class="a" style="left:958.00px;top:20px;font-size:11px;color:#fff;transform:scaleX(0.9256);transform-origin:0 0;">Alamo</div>
<div class="a" style="left:1033.00px;top:20px;font-size:11px;color:#fff;transform:scaleX(0.9366);transform-origin:0 0;">yes</div>
<div class="a" style="left:1058.00px;top:20px;font-size:11px;color:#fff;">auto</div>
<div class="a" style="left:1px;top:34px;width:1085px;height:14px;background:#b3dffd"></div>
<div class="a" style="left:1px;top:48px;width:1352px;height:1px;background:#d4d0c8"></div>
<div class="a" style="left:120px;top:34px;width:1px;height:14px;background:#d4d0c8"></div>
<div class="a" style="left:145px;top:34px;width:1px;height:14px;background:#d4d0c8"></div>
<div class="a" style="left:345px;top:34px;width:1px;height:14px;background:#d4d0c8"></div>
<div class="a" style="left:420px;top:34px;width:1px;height:14px;background:#d4d0c8"></div>
<div class="a" style="left:455px;top:34px;width:1px;height:14px;background:#d4d0c8"></div>
<div class="a" style="left:525px;top:34px;width:1px;height:14px;background:#d4d0c8"></div>
<div class="a" style="left:565px;top:34px;width:1px;height:14px;background:#d4d0c8"></div>
<div class="a" style="left:600px;top:34px;width:1px;height:14px;background:#d4d0c8"></div>
<div class="a" style="left:670px;top:34px;width:1px;height:14px;background:#d4d0c8"></div>
<div class="a" style="left:710px;top:34px;width:1px;height:14px;background:#d4d0c8"></div>
<div class="a" style="left:735px;top:34px;width:1px;height:14px;background:#d4d0c8"></div>
<div class="a" style="left:785px;top:34px;width:1px;height:14px;background:#d4d0c8"></div>
<div class="a" style="left:835px;top:34px;width:1px;height:14px;background:#d4d0c8"></div>
<div class="a" style="left:890px;top:34px;width:1px;height:14px;background:#d4d0c8"></div>
<div class="a" style="left:955px;top:34px;width:1px;height:14px;background:#d4d0c8"></div>
<div class="a" style="left:1030px;top:34px;width:1px;height:14px;background:#d4d0c8"></div>
<div class="a" style="left:1055px;top:34px;width:1px;height:14px;background:#d4d0c8"></div>
<div class="a" style="left:1085px;top:34px;width:1px;height:14px;background:#d4d0c8"></div>
<div class="a" style="left:3.00px;top:35px;font-size:11px;transform:scaleX(0.8771);transform-origin:0 0;">DODGE GRAND CAR</div>
<div class="a" style="left:101px;top:43px;width:9px;height:2px;background:repeating-linear-gradient(90deg,#000 0 1px,transparent 1px 4px)"></div>
<div class="a" style="left:136.00px;top:35px;font-size:11px;">7</div>
<div class="a" style="left:148.00px;top:35px;font-size:11px;transform:scaleX(0.9724);transform-origin:0 0;">Van(Mini) - Inclusive product - Plus Ex</div>
<div class="a" style="left:331px;top:43px;width:9px;height:2px;background:repeating-linear-gradient(90deg,#000 0 1px,transparent 1px 4px)"></div>
<div class="a" style="left:348.00px;top:35px;font-size:11px;transform:scaleX(0.9403);transform-origin:0 0;">Flexible Car</div>
<div class="a" style="left:406px;top:43px;width:9px;height:2px;background:repeating-linear-gradient(90deg,#000 0 1px,transparent 1px 4px)"></div>
<div class="a" style="left:423.00px;top:35px;font-size:11px;transform:scaleX(0.9124);transform-origin:0 0;">Sun</div>
<div class="a" style="left:458.00px;top:35px;font-size:11px;transform:scaleX(1.0103);transform-origin:0 0;">18/06/2017</div>
<div class="a" style="left:528.00px;top:35px;font-size:11px;transform:scaleX(0.9942);transform-origin:0 0;">12:00</div>
<div class="a" style="left:568.00px;top:35px;font-size:11px;transform:scaleX(0.9124);transform-origin:0 0;">Sun</div>
<div class="a" style="left:602.50px;top:35px;font-size:11px;transform:scaleX(1.0103);transform-origin:0 0;">02/07/2017</div>
<div class="a" style="left:673.00px;top:35px;font-size:11px;transform:scaleX(0.9942);transform-origin:0 0;">12:00</div>
<div class="a" style="left:721.50px;top:35px;font-size:11px;transform:scaleX(0.8871);transform-origin:0 0;">14</div>
<div class="a" style="left:738.00px;top:35px;font-size:11px;transform:scaleX(0.9203);transform-origin:0 0;">On Air</div>
<div class="a" style="left:769px;top:43px;width:9px;height:2px;background:repeating-linear-gradient(90deg,#000 0 1px,transparent 1px 4px)"></div>
<div class="a" style="left:788.00px;top:35px;font-size:11px;transform:scaleX(0.9203);transform-origin:0 0;">On Air</div>
<div class="a" style="left:819px;top:43px;width:9px;height:2px;background:repeating-linear-gradient(90deg,#000 0 1px,transparent 1px 4px)"></div>
<div class="a" style="left:853.25px;top:35px;font-size:11px;transform:scaleX(1.0067);transform-origin:0 0;">571.02</div>
<div class="a" style="left:918.25px;top:35px;font-size:11px;transform:scaleX(1.0067);transform-origin:0 0;">571.02</div>
<div class="a" style="left:958.00px;top:35px;font-size:11px;transform:scaleX(0.9256);transform-origin:0 0;">Alamo</div>
<div class="a" style="left:1033.00px;top:35px;font-size:11px;transform:scaleX(0.9366);transform-origin:0 0;">yes</div>
<div class="a" style="left:1058.00px;top:35px;font-size:11px;">auto</div>
<div class="a" style="left:1px;top:49px;width:1085px;height:14px;background:#b3dffd"></div>
<div class="a" style="left:1px;top:63px;width:1352px;height:1px;background:#d4d0c8"></div>
<div class="a" style="left:120px;top:49px;width:1px;height:14px;background:#d4d0c8"></div>
<div class="a" style="left:145px;top:49px;width:1px;height:14px;background:#d4d0c8"></div>
<div class="a" style="left:345px;top:49px;width:1px;height:14px;background:#d4d0c8"></div>
<div class="a" style="left:420px;top:49px;width:1px;height:14px;background:#d4d0c8"></div>
<div class="a" style="left:455px;top:49px;width:1px;height:14px;background:#d4d0c8"></div>
<div class="a" style="left:525px;top:49px;width:1px;height:14px;background:#d4d0c8"></div>
<div class="a" style="left:565px;top:49px;width:1px;height:14px;background:#d4d0c8"></div>
<div class="a" style="left:600px;top:49px;width:1px;height:14px;background:#d4d0c8"></div>
<div class="a" style="left:670px;top:49px;width:1px;height:14px;background:#d4d0c8"></div>
<div class="a" style="left:710px;top:49px;width:1px;height:14px;background:#d4d0c8"></div>
<div class="a" style="left:735px;top:49px;width:1px;height:14px;background:#d4d0c8"></div>
<div class="a" style="left:785px;top:49px;width:1px;height:14px;background:#d4d0c8"></div>
<div class="a" style="left:835px;top:49px;width:1px;height:14px;background:#d4d0c8"></div>
<div class="a" style="left:890px;top:49px;width:1px;height:14px;background:#d4d0c8"></div>
<div class="a" style="left:955px;top:49px;width:1px;height:14px;background:#d4d0c8"></div>
<div class="a" style="left:1030px;top:49px;width:1px;height:14px;background:#d4d0c8"></div>
<div class="a" style="left:1055px;top:49px;width:1px;height:14px;background:#d4d0c8"></div>
<div class="a" style="left:1085px;top:49px;width:1px;height:14px;background:#d4d0c8"></div>
<div class="a" style="left:3.00px;top:50px;font-size:11px;transform:scaleX(0.8771);transform-origin:0 0;">DODGE GRAND CAR</div>
<div class="a" style="left:101px;top:58px;width:9px;height:2px;background:repeating-linear-gradient(90deg,#000 0 1px,transparent 1px 4px)"></div>
<div class="a" style="left:136.00px;top:50px;font-size:11px;">7</div>
<div class="a" style="left:148.00px;top:50px;font-size:11px;transform:scaleX(0.9760);transform-origin:0 0;">Van(Mini) - Gold</div>
<div class="a" style="left:348.00px;top:50px;font-size:11px;transform:scaleX(0.9403);transform-origin:0 0;">Flexible Car</div>
<div class="a" style="left:406px;top:58px;width:9px;height:2px;background:repeating-linear-gradient(90deg,#000 0 1px,transparent 1px 4px)"></div>
<div class="a" style="left:423.00px;top:50px;font-size:11px;transform:scaleX(0.9124);transform-origin:0 0;">Sun</div>
<div class="a" style="left:458.00px;top:50px;font-size:11px;transform:scaleX(1.0103);transform-origin:0 0;">18/06/2017</div>
<div class="a" style="left:528.00px;top:50px;font-size:11px;transform:scaleX(0.9942);transform-origin:0 0;">12:00</div>
<div class="a" style="left:568.00px;top:50px;font-size:11px;transform:scaleX(0.9124);transform-origin:0 0;">Sun</div>
<div class="a" style="left:602.50px;top:50px;font-size:11px;transform:scaleX(1.0103);transform-origin:0 0;">02/07/2017</div>
<div class="a" style="left:673.00px;top:50px;font-size:11px;transform:scaleX(0.9942);transform-origin:0 0;">12:00</div>
<div class="a" style="left:721.50px;top:50px;font-size:11px;transform:scaleX(0.8871);transform-origin:0 0;">14</div>
<div class="a" style="left:738.00px;top:50px;font-size:11px;transform:scaleX(0.9203);transform-origin:0 0;">On Air</div>
<div class="a" style="left:769px;top:58px;width:9px;height:2px;background:repeating-linear-gradient(90deg,#000 0 1px,transparent 1px 4px)"></div>
<div class="a" style="left:788.00px;top:50px;font-size:11px;transform:scaleX(0.9203);transform-origin:0 0;">On Air</div>
<div class="a" style="left:819px;top:58px;width:9px;height:2px;background:repeating-linear-gradient(90deg,#000 0 1px,transparent 1px 4px)"></div>
<div class="a" style="left:853.25px;top:50px;font-size:11px;transform:scaleX(1.0067);transform-origin:0 0;">590.16</div>
<div class="a" style="left:918.25px;top:50px;font-size:11px;transform:scaleX(1.0067);transform-origin:0 0;">590.16</div>
<div class="a" style="left:958.00px;top:50px;font-size:11px;transform:scaleX(0.9256);transform-origin:0 0;">Alamo</div>
<div class="a" style="left:1033.00px;top:50px;font-size:11px;transform:scaleX(0.9366);transform-origin:0 0;">yes</div>
<div class="a" style="left:1058.00px;top:50px;font-size:11px;">auto</div>
<div class="a" style="left:1px;top:64px;width:1085px;height:14px;background:#b3dffd"></div>
<div class="a" style="left:1px;top:78px;width:1352px;height:1px;background:#d4d0c8"></div>
<div class="a" style="left:120px;top:64px;width:1px;height:14px;background:#d4d0c8"></div>
<div class="a" style="left:145px;top:64px;width:1px;height:14px;background:#d4d0c8"></div>
<div class="a" style="left:345px;top:64px;width:1px;height:14px;background:#d4d0c8"></div>
<div class="a" style="left:420px;top:64px;width:1px;height:14px;background:#d4d0c8"></div>
<div class="a" style="left:455px;top:64px;width:1px;height:14px;background:#d4d0c8"></div>
<div class="a" style="left:525px;top:64px;width:1px;height:14px;background:#d4d0c8"></div>
<div class="a" style="left:565px;top:64px;width:1px;height:14px;background:#d4d0c8"></div>
<div class="a" style="left:600px;top:64px;width:1px;height:14px;background:#d4d0c8"></div>
<div class="a" style="left:670px;top:64px;width:1px;height:14px;background:#d4d0c8"></div>
<div class="a" style="left:710px;top:64px;width:1px;height:14px;background:#d4d0c8"></div>
<div class="a" style="left:735px;top:64px;width:1px;height:14px;background:#d4d0c8"></div>
<div class="a" style="left:785px;top:64px;width:1px;height:14px;background:#d4d0c8"></div>
<div class="a" style="left:835px;top:64px;width:1px;height:14px;background:#d4d0c8"></div>
<div class="a" style="left:890px;top:64px;width:1px;height:14px;background:#d4d0c8"></div>
<div class="a" style="left:955px;top:64px;width:1px;height:14px;background:#d4d0c8"></div>
<div class="a" style="left:1030px;top:64px;width:1px;height:14px;background:#d4d0c8"></div>
<div class="a" style="left:1055px;top:64px;width:1px;height:14px;background:#d4d0c8"></div>
<div class="a" style="left:1085px;top:64px;width:1px;height:14px;background:#d4d0c8"></div>
<div class="a" style="left:3.00px;top:65px;font-size:11px;transform:scaleX(0.8771);transform-origin:0 0;">DODGE GRAND CAR</div>
<div class="a" style="left:101px;top:73px;width:9px;height:2px;background:repeating-linear-gradient(90deg,#000 0 1px,transparent 1px 4px)"></div>
<div class="a" style="left:136.00px;top:65px;font-size:11px;">7</div>
<div class="a" style="left:148.00px;top:65px;font-size:11px;transform:scaleX(0.9760);transform-origin:0 0;">Van(Mini) - Gold - Plus Excess Refund</div>
<div class="a" style="left:348.00px;top:65px;font-size:11px;transform:scaleX(0.9403);transform-origin:0 0;">Flexible Car</div>
<div class="a" style="left:406px;top:73px;width:9px;height:2px;background:repeating-linear-gradient(90deg,#000 0 1px,transparent 1px 4px)"></div>
<div class="a" style="left:423.00px;top:65px;font-size:11px;transform:scaleX(0.9124);transform-origin:0 0;">Sun</div>
<div class="a" style="left:458.00px;top:65px;font-size:11px;transform:scaleX(1.0103);transform-origin:0 0;">18/06/2017</div>
<div class="a" style="left:528.00px;top:65px;font-size:11px;transform:scaleX(0.9942);transform-origin:0 0;">12:00</div>
<div class="a" style="left:568.00px;top:65px;font-size:11px;transform:scaleX(0.9124);transform-origin:0 0;">Sun</div>
<div class="a" style="left:602.50px;top:65px;font-size:11px;transform:scaleX(1.0103);transform-origin:0 0;">02/07/2017</div>
<div class="a" style="left:673.00px;top:65px;font-size:11px;transform:scaleX(0.9942);transform-origin:0 0;">12:00</div>
<div class="a" style="left:721.50px;top:65px;font-size:11px;transform:scaleX(0.8871);transform-origin:0 0;">14</div>
<div class="a" style="left:738.00px;top:65px;font-size:11px;transform:scaleX(0.9203);transform-origin:0 0;">On Air</div>
<div class="a" style="left:769px;top:73px;width:9px;height:2px;background:repeating-linear-gradient(90deg,#000 0 1px,transparent 1px 4px)"></div>
<div class="a" style="left:788.00px;top:65px;font-size:11px;transform:scaleX(0.9203);transform-origin:0 0;">On Air</div>
<div class="a" style="left:819px;top:73px;width:9px;height:2px;background:repeating-linear-gradient(90deg,#000 0 1px,transparent 1px 4px)"></div>
<div class="a" style="left:853.25px;top:65px;font-size:11px;transform:scaleX(1.0067);transform-origin:0 0;">623.65</div>
<div class="a" style="left:918.25px;top:65px;font-size:11px;transform:scaleX(1.0067);transform-origin:0 0;">623.65</div>
<div class="a" style="left:958.00px;top:65px;font-size:11px;transform:scaleX(0.9256);transform-origin:0 0;">Alamo</div>
<div class="a" style="left:1033.00px;top:65px;font-size:11px;transform:scaleX(0.9366);transform-origin:0 0;">yes</div>
<div class="a" style="left:1058.00px;top:65px;font-size:11px;">auto</div>
<div class="a" style="left:1px;top:79px;width:1085px;height:14px;background:#b3dffd"></div>
<div class="a" style="left:1px;top:93px;width:1352px;height:1px;background:#d4d0c8"></div>
<div class="a" style="left:120px;top:79px;width:1px;height:14px;background:#d4d0c8"></div>
<div class="a" style="left:145px;top:79px;width:1px;height:14px;background:#d4d0c8"></div>
<div class="a" style="left:345px;top:79px;width:1px;height:14px;background:#d4d0c8"></div>
<div class="a" style="left:420px;top:79px;width:1px;height:14px;background:#d4d0c8"></div>
<div class="a" style="left:455px;top:79px;width:1px;height:14px;background:#d4d0c8"></div>
<div class="a" style="left:525px;top:79px;width:1px;height:14px;background:#d4d0c8"></div>
<div class="a" style="left:565px;top:79px;width:1px;height:14px;background:#d4d0c8"></div>
<div class="a" style="left:600px;top:79px;width:1px;height:14px;background:#d4d0c8"></div>
<div class="a" style="left:670px;top:79px;width:1px;height:14px;background:#d4d0c8"></div>
<div class="a" style="left:710px;top:79px;width:1px;height:14px;background:#d4d0c8"></div>
<div class="a" style="left:735px;top:79px;width:1px;height:14px;background:#d4d0c8"></div>
<div class="a" style="left:785px;top:79px;width:1px;height:14px;background:#d4d0c8"></div>
<div class="a" style="left:835px;top:79px;width:1px;height:14px;background:#d4d0c8"></div>
<div class="a" style="left:890px;top:79px;width:1px;height:14px;background:#d4d0c8"></div>
<div class="a" style="left:955px;top:79px;width:1px;height:14px;background:#d4d0c8"></div>
<div class="a" style="left:1030px;top:79px;width:1px;height:14px;background:#d4d0c8"></div>
<div class="a" style="left:1055px;top:79px;width:1px;height:14px;background:#d4d0c8"></div>
<div class="a" style="left:1085px;top:79px;width:1px;height:14px;background:#d4d0c8"></div>
<div class="a" style="left:3.00px;top:80px;font-size:11px;transform:scaleX(0.8771);transform-origin:0 0;">DODGE GRAND CAR</div>
<div class="a" style="left:101px;top:88px;width:9px;height:2px;background:repeating-linear-gradient(90deg,#000 0 1px,transparent 1px 4px)"></div>
<div class="a" style="left:136.00px;top:80px;font-size:11px;">7</div>
<div class="a" style="left:148.00px;top:80px;font-size:11px;transform:scaleX(0.9760);transform-origin:0 0;">Van(Mini) - Inclusive GPS</div>
<div class="a" style="left:348.00px;top:80px;font-size:11px;transform:scaleX(0.9403);transform-origin:0 0;">Flexible Car</div>
<div class="a" style="left:406px;top:88px;width:9px;height:2px;background:repeating-linear-gradient(90deg,#000 0 1px,transparent 1px 4px)"></div>
<div class="a" style="left:423.00px;top:80px;font-size:11px;transform:scaleX(0.9124);transform-origin:0 0;">Sun</div>
<div class="a" style="left:458.00px;top:80px;font-size:11px;transform:scaleX(1.0103);transform-origin:0 0;">18/06/2017</div>
<div class="a" style="left:528.00px;top:80px;font-size:11px;transform:scaleX(0.9942);transform-origin:0 0;">12:00</div>
<div class="a" style="left:568.00px;top:80px;font-size:11px;transform:scaleX(0.9124);transform-origin:0 0;">Sun</div>
<div class="a" style="left:602.50px;top:80px;font-size:11px;transform:scaleX(1.0103);transform-origin:0 0;">02/07/2017</div>
<div class="a" style="left:673.00px;top:80px;font-size:11px;transform:scaleX(0.9942);transform-origin:0 0;">12:00</div>
<div class="a" style="left:721.50px;top:80px;font-size:11px;transform:scaleX(0.8871);transform-origin:0 0;">14</div>
<div class="a" style="left:738.00px;top:80px;font-size:11px;transform:scaleX(0.9203);transform-origin:0 0;">On Air</div>
<div class="a" style="left:769px;top:88px;width:9px;height:2px;background:repeating-linear-gradient(90deg,#000 0 1px,transparent 1px 4px)"></div>
<div class="a" style="left:788.00px;top:80px;font-size:11px;transform:scaleX(0.9203);transform-origin:0 0;">On Air</div>
<div class="a" style="left:819px;top:88px;width:9px;height:2px;background:repeating-linear-gradient(90deg,#000 0 1px,transparent 1px 4px)"></div>
<div class="a" style="left:853.25px;top:80px;font-size:11px;transform:scaleX(1.0067);transform-origin:0 0;">627.50</div>
<div class="a" style="left:918.25px;top:80px;font-size:11px;transform:scaleX(1.0067);transform-origin:0 0;">627.50</div>
<div class="a" style="left:958.00px;top:80px;font-size:11px;transform:scaleX(0.9256);transform-origin:0 0;">Alamo</div>
<div class="a" style="left:1033.00px;top:80px;font-size:11px;transform:scaleX(0.9366);transform-origin:0 0;">yes</div>
<div class="a" style="left:1058.00px;top:80px;font-size:11px;">auto</div>
<div class="a" style="left:1px;top:94px;width:1085px;height:14px;background:#b3dffd"></div>
<div class="a" style="left:1px;top:108px;width:1352px;height:1px;background:#d4d0c8"></div>
<div class="a" style="left:120px;top:94px;width:1px;height:14px;background:#d4d0c8"></div>
<div class="a" style="left:145px;top:94px;width:1px;height:14px;background:#d4d0c8"></div>
<div class="a" style="left:345px;top:94px;width:1px;height:14px;background:#d4d0c8"></div>
<div class="a" style="left:420px;top:94px;width:1px;height:14px;background:#d4d0c8"></div>
<div class="a" style="left:455px;top:94px;width:1px;height:14px;background:#d4d0c8"></div>
<div class="a" style="left:525px;top:94px;width:1px;height:14px;background:#d4d0c8"></div>
<div class="a" style="left:565px;top:94px;width:1px;height:14px;background:#d4d0c8"></div>
<div class="a" style="left:600px;top:94px;width:1px;height:14px;background:#d4d0c8"></div>
<div class="a" style="left:670px;top:94px;width:1px;height:14px;background:#d4d0c8"></div>
<div class="a" style="left:710px;top:94px;width:1px;height:14px;background:#d4d0c8"></div>
<div class="a" style="left:735px;top:94px;width:1px;height:14px;background:#d4d0c8"></div>
<div class="a" style="left:785px;top:94px;width:1px;height:14px;background:#d4d0c8"></div>
<div class="a" style="left:835px;top:94px;width:1px;height:14px;background:#d4d0c8"></div>
<div class="a" style="left:890px;top:94px;width:1px;height:14px;background:#d4d0c8"></div>
<div class="a" style="left:955px;top:94px;width:1px;height:14px;background:#d4d0c8"></div>
<div class="a" style="left:1030px;top:94px;width:1px;height:14px;background:#d4d0c8"></div>
<div class="a" style="left:1055px;top:94px;width:1px;height:14px;background:#d4d0c8"></div>
<div class="a" style="left:1085px;top:94px;width:1px;height:14px;background:#d4d0c8"></div>
<div class="a" style="left:3.00px;top:95px;font-size:11px;transform:scaleX(0.8782);transform-origin:0 0;">CHEVROLET TAHOE</div>
<div class="a" style="left:102px;top:103px;width:9px;height:2px;background:repeating-linear-gradient(90deg,#000 0 1px,transparent 1px 4px)"></div>
<div class="a" style="left:136.00px;top:95px;font-size:11px;">7</div>
<div class="a" style="left:148.00px;top:95px;font-size:11px;transform:scaleX(0.9760);transform-origin:0 0;">SUV(Full Size) - Inclusive product</div>
<div class="a" style="left:348.00px;top:95px;font-size:11px;transform:scaleX(0.9403);transform-origin:0 0;">Flexible Car</div>
<div class="a" style="left:406px;top:103px;width:9px;height:2px;background:repeating-linear-gradient(90deg,#000 0 1px,transparent 1px 4px)"></div>
<div class="a" style="left:423.00px;top:95px;font-size:11px;transform:scaleX(0.9124);transform-origin:0 0;">Sun</div>
<div class="a" style="left:458.00px;top:95px;font-size:11px;transform:scaleX(1.0103);transform-origin:0 0;">18/06/2017</div>
<div class="a" style="left:528.00px;top:95px;font-size:11px;transform:scaleX(0.9942);transform-origin:0 0;">12:00</div>
<div class="a" style="left:568.00px;top:95px;font-size:11px;transform:scaleX(0.9124);transform-origin:0 0;">Sun</div>
<div class="a" style="left:602.50px;top:95px;font-size:11px;transform:scaleX(1.0103);transform-origin:0 0;">02/07/2017</div>
<div class="a" style="left:673.00px;top:95px;font-size:11px;transform:scaleX(0.9942);transform-origin:0 0;">12:00</div>
<div class="a" style="left:721.50px;top:95px;font-size:11px;transform:scaleX(0.8871);transform-origin:0 0;">14</div>
<div class="a" style="left:738.00px;top:95px;font-size:11px;transform:scaleX(0.9203);transform-origin:0 0;">On Air</div>
<div class="a" style="left:769px;top:103px;width:9px;height:2px;background:repeating-linear-gradient(90deg,#000 0 1px,transparent 1px 4px)"></div>
<div class="a" style="left:788.00px;top:95px;font-size:11px;transform:scaleX(0.9203);transform-origin:0 0;">On Air</div>
<div class="a" style="left:819px;top:103px;width:9px;height:2px;background:repeating-linear-gradient(90deg,#000 0 1px,transparent 1px 4px)"></div>
<div class="a" style="left:853.25px;top:95px;font-size:11px;transform:scaleX(1.0067);transform-origin:0 0;">654.66</div>
<div class="a" style="left:918.25px;top:95px;font-size:11px;transform:scaleX(1.0067);transform-origin:0 0;">654.66</div>
<div class="a" style="left:958.00px;top:95px;font-size:11px;transform:scaleX(0.9256);transform-origin:0 0;">Alamo</div>
<div class="a" style="left:1033.00px;top:95px;font-size:11px;transform:scaleX(0.9366);transform-origin:0 0;">yes</div>
<div class="a" style="left:1058.00px;top:95px;font-size:11px;">auto</div>
<div class="a" style="left:1px;top:109px;width:1085px;height:14px;background:#b3dffd"></div>
<div class="a" style="left:1px;top:123px;width:1352px;height:1px;background:#d4d0c8"></div>
<div class="a" style="left:120px;top:109px;width:1px;height:14px;background:#d4d0c8"></div>
<div class="a" style="left:145px;top:109px;width:1px;height:14px;background:#d4d0c8"></div>
<div class="a" style="left:345px;top:109px;width:1px;height:14px;background:#d4d0c8"></div>
<div class="a" style="left:420px;top:109px;width:1px;height:14px;background:#d4d0c8"></div>
<div class="a" style="left:455px;top:109px;width:1px;height:14px;background:#d4d0c8"></div>
<div class="a" style="left:525px;top:109px;width:1px;height:14px;background:#d4d0c8"></div>
<div class="a" style="left:565px;top:109px;width:1px;height:14px;background:#d4d0c8"></div>
<div class="a" style="left:600px;top:109px;width:1px;height:14px;background:#d4d0c8"></div>
<div class="a" style="left:670px;top:109px;width:1px;height:14px;background:#d4d0c8"></div>
<div class="a" style="left:710px;top:109px;width:1px;height:14px;background:#d4d0c8"></div>
<div class="a" style="left:735px;top:109px;width:1px;height:14px;background:#d4d0c8"></div>
<div class="a" style="left:785px;top:109px;width:1px;height:14px;background:#d4d0c8"></div>
<div class="a" style="left:835px;top:109px;width:1px;height:14px;background:#d4d0c8"></div>
<div class="a" style="left:890px;top:109px;width:1px;height:14px;background:#d4d0c8"></div>
<div class="a" style="left:955px;top:109px;width:1px;height:14px;background:#d4d0c8"></div>
<div class="a" style="left:1030px;top:109px;width:1px;height:14px;background:#d4d0c8"></div>
<div class="a" style="left:1055px;top:109px;width:1px;height:14px;background:#d4d0c8"></div>
<div class="a" style="left:1085px;top:109px;width:1px;height:14px;background:#d4d0c8"></div>
<div class="a" style="left:3.00px;top:110px;font-size:11px;transform:scaleX(0.8771);transform-origin:0 0;">DODGE GRAND CAR</div>
<div class="a" style="left:101px;top:118px;width:9px;height:2px;background:repeating-linear-gradient(90deg,#000 0 1px,transparent 1px 4px)"></div>
<div class="a" style="left:136.00px;top:110px;font-size:11px;">7</div>
<div class="a" style="left:148.00px;top:110px;font-size:11px;transform:scaleX(0.9537);transform-origin:0 0;">Van(Mini) - Inclusive GPS - Plus Exces</div>
<div class="a" style="left:331px;top:118px;width:9px;height:2px;background:repeating-linear-gradient(90deg,#000 0 1px,transparent 1px 4px)"></div>
<div class="a" style="left:348.00px;top:110px;font-size:11px;transform:scaleX(0.9403);transform-origin:0 0;">Flexible Car</div>
<div class="a" style="left:406px;top:118px;width:9px;height:2px;background:repeating-linear-gradient(90deg,#000 0 1px,transparent 1px 4px)"></div>
<div class="a" style="left:423.00px;top:110px;font-size:11px;transform:scaleX(0.9124);transform-origin:0 0;">Sun</div>
<div class="a" style="left:458.00px;top:110px;font-size:11px;transform:scaleX(1.0103);transform-origin:0 0;">18/06/2017</div>
<div class="a" style="left:528.00px;top:110px;font-size:11px;transform:scaleX(0.9942);transform-origin:0 0;">12:00</div>
<div class="a" style="left:568.00px;top:110px;font-size:11px;transform:scaleX(0.9124);transform-origin:0 0;">Sun</div>
<div class="a" style="left:602.50px;top:110px;font-size:11px;transform:scaleX(1.0103);transform-origin:0 0;">02/07/2017</div>
<div class="a" style="left:673.00px;top:110px;font-size:11px;transform:scaleX(0.9942);transform-origin:0 0;">12:00</div>
<div class="a" style="left:721.50px;top:110px;font-size:11px;transform:scaleX(0.8871);transform-origin:0 0;">14</div>
<div class="a" style="left:738.00px;top:110px;font-size:11px;transform:scaleX(0.9203);transform-origin:0 0;">On Air</div>
<div class="a" style="left:769px;top:118px;width:9px;height:2px;background:repeating-linear-gradient(90deg,#000 0 1px,transparent 1px 4px)"></div>
<div class="a" style="left:788.00px;top:110px;font-size:11px;transform:scaleX(0.9203);transform-origin:0 0;">On Air</div>
<div class="a" style="left:819px;top:118px;width:9px;height:2px;background:repeating-linear-gradient(90deg,#000 0 1px,transparent 1px 4px)"></div>
<div class="a" style="left:853.25px;top:110px;font-size:11px;transform:scaleX(1.0067);transform-origin:0 0;">660.99</div>
<div class="a" style="left:918.25px;top:110px;font-size:11px;transform:scaleX(1.0067);transform-origin:0 0;">660.99</div>
<div class="a" style="left:958.00px;top:110px;font-size:11px;transform:scaleX(0.9256);transform-origin:0 0;">Alamo</div>
<div class="a" style="left:1033.00px;top:110px;font-size:11px;transform:scaleX(0.9366);transform-origin:0 0;">yes</div>
<div class="a" style="left:1058.00px;top:110px;font-size:11px;">auto</div>
<div class="a" style="left:1px;top:124px;width:1085px;height:14px;background:#b3dffd"></div>
<div class="a" style="left:1px;top:138px;width:1352px;height:1px;background:#d4d0c8"></div>
<div class="a" style="left:120px;top:124px;width:1px;height:14px;background:#d4d0c8"></div>
<div class="a" style="left:145px;top:124px;width:1px;height:14px;background:#d4d0c8"></div>
<div class="a" style="left:345px;top:124px;width:1px;height:14px;background:#d4d0c8"></div>
<div class="a" style="left:420px;top:124px;width:1px;height:14px;background:#d4d0c8"></div>
<div class="a" style="left:455px;top:124px;width:1px;height:14px;background:#d4d0c8"></div>
<div class="a" style="left:525px;top:124px;width:1px;height:14px;background:#d4d0c8"></div>
<div class="a" style="left:565px;top:124px;width:1px;height:14px;background:#d4d0c8"></div>
<div class="a" style="left:600px;top:124px;width:1px;height:14px;background:#d4d0c8"></div>
<div class="a" style="left:670px;top:124px;width:1px;height:14px;background:#d4d0c8"></div>
<div class="a" style="left:710px;top:124px;width:1px;height:14px;background:#d4d0c8"></div>
<div class="a" style="left:735px;top:124px;width:1px;height:14px;background:#d4d0c8"></div>
<div class="a" style="left:785px;top:124px;width:1px;height:14px;background:#d4d0c8"></div>
<div class="a" style="left:835px;top:124px;width:1px;height:14px;background:#d4d0c8"></div>
<div class="a" style="left:890px;top:124px;width:1px;height:14px;background:#d4d0c8"></div>
<div class="a" style="left:955px;top:124px;width:1px;height:14px;background:#d4d0c8"></div>
<div class="a" style="left:1030px;top:124px;width:1px;height:14px;background:#d4d0c8"></div>
<div class="a" style="left:1055px;top:124px;width:1px;height:14px;background:#d4d0c8"></div>
<div class="a" style="left:1085px;top:124px;width:1px;height:14px;background:#d4d0c8"></div>
<div class="a" style="left:3.00px;top:125px;font-size:11px;transform:scaleX(0.8771);transform-origin:0 0;">DODGE GRAND CAR</div>
<div class="a" style="left:101px;top:133px;width:9px;height:2px;background:repeating-linear-gradient(90deg,#000 0 1px,transparent 1px 4px)"></div>
<div class="a" style="left:136.00px;top:125px;font-size:11px;">7</div>
<div class="a" style="left:148.00px;top:125px;font-size:11px;transform:scaleX(0.9760);transform-origin:0 0;">Van(Mini) - Gold GPS</div>
<div class="a" style="left:348.00px;top:125px;font-size:11px;transform:scaleX(0.9403);transform-origin:0 0;">Flexible Car</div>
<div class="a" style="left:406px;top:133px;width:9px;height:2px;background:repeating-linear-gradient(90deg,#000 0 1px,transparent 1px 4px)"></div>
<div class="a" style="left:423.00px;top:125px;font-size:11px;transform:scaleX(0.9124);transform-origin:0 0;">Sun</div>
<div class="a" style="left:458.00px;top:125px;font-size:11px;transform:scaleX(1.0103);transform-origin:0 0;">18/06/2017</div>
<div class="a" style="left:528.00px;top:125px;font-size:11px;transform:scaleX(0.9942);transform-origin:0 0;">12:00</div>
<div class="a" style="left:568.00px;top:125px;font-size:11px;transform:scaleX(0.9124);transform-origin:0 0;">Sun</div>
<div class="a" style="left:602.50px;top:125px;font-size:11px;transform:scaleX(1.0103);transform-origin:0 0;">02/07/2017</div>
<div class="a" style="left:673.00px;top:125px;font-size:11px;transform:scaleX(0.9942);transform-origin:0 0;">12:00</div>
<div class="a" style="left:721.50px;top:125px;font-size:11px;transform:scaleX(0.8871);transform-origin:0 0;">14</div>
<div class="a" style="left:738.00px;top:125px;font-size:11px;transform:scaleX(0.9203);transform-origin:0 0;">On Air</div>
<div class="a" style="left:769px;top:133px;width:9px;height:2px;background:repeating-linear-gradient(90deg,#000 0 1px,transparent 1px 4px)"></div>
<div class="a" style="left:788.00px;top:125px;font-size:11px;transform:scaleX(0.9203);transform-origin:0 0;">On Air</div>
<div class="a" style="left:819px;top:133px;width:9px;height:2px;background:repeating-linear-gradient(90deg,#000 0 1px,transparent 1px 4px)"></div>
<div class="a" style="left:853.25px;top:125px;font-size:11px;transform:scaleX(1.0067);transform-origin:0 0;">676.72</div>
<div class="a" style="left:918.25px;top:125px;font-size:11px;transform:scaleX(1.0067);transform-origin:0 0;">676.72</div>
<div class="a" style="left:958.00px;top:125px;font-size:11px;transform:scaleX(0.9256);transform-origin:0 0;">Alamo</div>
<div class="a" style="left:1033.00px;top:125px;font-size:11px;transform:scaleX(0.9366);transform-origin:0 0;">yes</div>
<div class="a" style="left:1058.00px;top:125px;font-size:11px;">auto</div>
<div class="a" style="left:1px;top:139px;width:1085px;height:14px;background:#b3dffd"></div>
<div class="a" style="left:1px;top:153px;width:1352px;height:1px;background:#d4d0c8"></div>
<div class="a" style="left:120px;top:139px;width:1px;height:14px;background:#d4d0c8"></div>
<div class="a" style="left:145px;top:139px;width:1px;height:14px;background:#d4d0c8"></div>
<div class="a" style="left:345px;top:139px;width:1px;height:14px;background:#d4d0c8"></div>
<div class="a" style="left:420px;top:139px;width:1px;height:14px;background:#d4d0c8"></div>
<div class="a" style="left:455px;top:139px;width:1px;height:14px;background:#d4d0c8"></div>
<div class="a" style="left:525px;top:139px;width:1px;height:14px;background:#d4d0c8"></div>
<div class="a" style="left:565px;top:139px;width:1px;height:14px;background:#d4d0c8"></div>
<div class="a" style="left:600px;top:139px;width:1px;height:14px;background:#d4d0c8"></div>
<div class="a" style="left:670px;top:139px;width:1px;height:14px;background:#d4d0c8"></div>
<div class="a" style="left:710px;top:139px;width:1px;height:14px;background:#d4d0c8"></div>
<div class="a" style="left:735px;top:139px;width:1px;height:14px;background:#d4d0c8"></div>
<div class="a" style="left:785px;top:139px;width:1px;height:14px;background:#d4d0c8"></div>
<div class="a" style="left:835px;top:139px;width:1px;height:14px;background:#d4d0c8"></div>
<div class="a" style="left:890px;top:139px;width:1px;height:14px;background:#d4d0c8"></div>
<div class="a" style="left:955px;top:139px;width:1px;height:14px;background:#d4d0c8"></div>
<div class="a" style="left:1030px;top:139px;width:1px;height:14px;background:#d4d0c8"></div>
<div class="a" style="left:1055px;top:139px;width:1px;height:14px;background:#d4d0c8"></div>
<div class="a" style="left:1085px;top:139px;width:1px;height:14px;background:#d4d0c8"></div>
<div class="a" style="left:3.00px;top:140px;font-size:11px;transform:scaleX(0.8782);transform-origin:0 0;">CHEVROLET TAHOE</div>
<div class="a" style="left:102px;top:148px;width:9px;height:2px;background:repeating-linear-gradient(90deg,#000 0 1px,transparent 1px 4px)"></div>
<div class="a" style="left:136.00px;top:140px;font-size:11px;">7</div>
<div class="a" style="left:148.00px;top:140px;font-size:11px;transform:scaleX(0.9526);transform-origin:0 0;">SUV(Full Size) - Inclusive product - Plu</div>
<div class="a" style="left:331px;top:148px;width:9px;height:2px;background:repeating-linear-gradient(90deg,#000 0 1px,transparent 1px 4px)"></div>
<div class="a" style="left:348.00px;top:140px;font-size:11px;transform:scaleX(0.9403);transform-origin:0 0;">Flexible Car</div>
<div class="a" style="left:406px;top:148px;width:9px;height:2px;background:repeating-linear-gradient(90deg,#000 0 1px,transparent 1px 4px)"></div>
<div class="a" style="left:423.00px;top:140px;font-size:11px;transform:scaleX(0.9124);transform-origin:0 0;">Sun</div>
<div class="a" style="left:458.00px;top:140px;font-size:11px;transform:scaleX(1.0103);transform-origin:0 0;">18/06/2017</div>
<div class="a" style="left:528.00px;top:140px;font-size:11px;transform:scaleX(0.9942);transform-origin:0 0;">12:00</div>
<div class="a" style="left:568.00px;top:140px;font-size:11px;transform:scaleX(0.9124);transform-origin:0 0;">Sun</div>
<div class="a" style="left:602.50px;top:140px;font-size:11px;transform:scaleX(1.0103);transform-origin:0 0;">02/07/2017</div>
<div class="a" style="left:673.00px;top:140px;font-size:11px;transform:scaleX(0.9942);transform-origin:0 0;">12:00</div>
<div class="a" style="left:721.50px;top:140px;font-size:11px;transform:scaleX(0.8871);transform-origin:0 0;">14</div>
<div class="a" style="left:738.00px;top:140px;font-size:11px;transform:scaleX(0.9203);transform-origin:0 0;">On Air</div>
<div class="a" style="left:769px;top:148px;width:9px;height:2px;background:repeating-linear-gradient(90deg,#000 0 1px,transparent 1px 4px)"></div>
<div class="a" style="left:788.00px;top:140px;font-size:11px;transform:scaleX(0.9203);transform-origin:0 0;">On Air</div>
<div class="a" style="left:819px;top:148px;width:9px;height:2px;background:repeating-linear-gradient(90deg,#000 0 1px,transparent 1px 4px)"></div>
<div class="a" style="left:853.25px;top:140px;font-size:11px;transform:scaleX(1.0067);transform-origin:0 0;">688.14</div>
<div class="a" style="left:918.25px;top:140px;font-size:11px;transform:scaleX(1.0067);transform-origin:0 0;">688.14</div>
<div class="a" style="left:958.00px;top:140px;font-size:11px;transform:scaleX(0.9256);transform-origin:0 0;">Alamo</div>
<div class="a" style="left:1033.00px;top:140px;font-size:11px;transform:scaleX(0.9366);transform-origin:0 0;">yes</div>
<div class="a" style="left:1058.00px;top:140px;font-size:11px;">auto</div>
<div class="a" style="left:1px;top:154px;width:1085px;height:14px;background:#b3dffd"></div>
<div class="a" style="left:1px;top:168px;width:1352px;height:1px;background:#d4d0c8"></div>
<div class="a" style="left:120px;top:154px;width:1px;height:14px;background:#d4d0c8"></div>
<div class="a" style="left:145px;top:154px;width:1px;height:14px;background:#d4d0c8"></div>
<div class="a" style="left:345px;top:154px;width:1px;height:14px;background:#d4d0c8"></div>
<div class="a" style="left:420px;top:154px;width:1px;height:14px;background:#d4d0c8"></div>
<div class="a" style="left:455px;top:154px;width:1px;height:14px;background:#d4d0c8"></div>
<div class="a" style="left:525px;top:154px;width:1px;height:14px;background:#d4d0c8"></div>
<div class="a" style="left:565px;top:154px;width:1px;height:14px;background:#d4d0c8"></div>
<div class="a" style="left:600px;top:154px;width:1px;height:14px;background:#d4d0c8"></div>
<div class="a" style="left:670px;top:154px;width:1px;height:14px;background:#d4d0c8"></div>
<div class="a" style="left:710px;top:154px;width:1px;height:14px;background:#d4d0c8"></div>
<div class="a" style="left:735px;top:154px;width:1px;height:14px;background:#d4d0c8"></div>
<div class="a" style="left:785px;top:154px;width:1px;height:14px;background:#d4d0c8"></div>
<div class="a" style="left:835px;top:154px;width:1px;height:14px;background:#d4d0c8"></div>
<div class="a" style="left:890px;top:154px;width:1px;height:14px;background:#d4d0c8"></div>
<div class="a" style="left:955px;top:154px;width:1px;height:14px;background:#d4d0c8"></div>
<div class="a" style="left:1030px;top:154px;width:1px;height:14px;background:#d4d0c8"></div>
<div class="a" style="left:1055px;top:154px;width:1px;height:14px;background:#d4d0c8"></div>
<div class="a" style="left:1085px;top:154px;width:1px;height:14px;background:#d4d0c8"></div>
<div class="a" style="left:3.00px;top:155px;font-size:11px;transform:scaleX(0.8782);transform-origin:0 0;">CHEVROLET TAHOE</div>
<div class="a" style="left:102px;top:163px;width:9px;height:2px;background:repeating-linear-gradient(90deg,#000 0 1px,transparent 1px 4px)"></div>
<div class="a" style="left:136.00px;top:155px;font-size:11px;">7</div>
<div class="a" style="left:148.00px;top:155px;font-size:11px;transform:scaleX(0.9760);transform-origin:0 0;">SUV(Full Size) - Gold</div>
<div class="a" style="left:348.00px;top:155px;font-size:11px;transform:scaleX(0.9403);transform-origin:0 0;">Flexible Car</div>
<div class="a" style="left:406px;top:163px;width:9px;height:2px;background:repeating-linear-gradient(90deg,#000 0 1px,transparent 1px 4px)"></div>
<div class="a" style="left:423.00px;top:155px;font-size:11px;transform:scaleX(0.9124);transform-origin:0 0;">Sun</div>
<div class="a" style="left:458.00px;top:155px;font-size:11px;transform:scaleX(1.0103);transform-origin:0 0;">18/06/2017</div>
<div class="a" style="left:528.00px;top:155px;font-size:11px;transform:scaleX(0.9942);transform-origin:0 0;">12:00</div>
<div class="a" style="left:568.00px;top:155px;font-size:11px;transform:scaleX(0.9124);transform-origin:0 0;">Sun</div>
<div class="a" style="left:602.50px;top:155px;font-size:11px;transform:scaleX(1.0103);transform-origin:0 0;">02/07/2017</div>
<div class="a" style="left:673.00px;top:155px;font-size:11px;transform:scaleX(0.9942);transform-origin:0 0;">12:00</div>
<div class="a" style="left:721.50px;top:155px;font-size:11px;transform:scaleX(0.8871);transform-origin:0 0;">14</div>
<div class="a" style="left:738.00px;top:155px;font-size:11px;transform:scaleX(0.9203);transform-origin:0 0;">On Air</div>
<div class="a" style="left:769px;top:163px;width:9px;height:2px;background:repeating-linear-gradient(90deg,#000 0 1px,transparent 1px 4px)"></div>
<div class="a" style="left:788.00px;top:155px;font-size:11px;transform:scaleX(0.9203);transform-origin:0 0;">On Air</div>
<div class="a" style="left:819px;top:163px;width:9px;height:2px;background:repeating-linear-gradient(90deg,#000 0 1px,transparent 1px 4px)"></div>
<div class="a" style="left:853.25px;top:155px;font-size:11px;transform:scaleX(1.0067);transform-origin:0 0;">692.00</div>
<div class="a" style="left:918.25px;top:155px;font-size:11px;transform:scaleX(1.0067);transform-origin:0 0;">692.00</div>
<div class="a" style="left:958.00px;top:155px;font-size:11px;transform:scaleX(0.9256);transform-origin:0 0;">Alamo</div>
<div class="a" style="left:1033.00px;top:155px;font-size:11px;transform:scaleX(0.9366);transform-origin:0 0;">yes</div>
<div class="a" style="left:1058.00px;top:155px;font-size:11px;">auto</div>
<div class="a" style="left:1px;top:169px;width:1085px;height:14px;background:#b3dffd"></div>
<div class="a" style="left:1px;top:183px;width:1352px;height:1px;background:#d4d0c8"></div>
<div class="a" style="left:120px;top:169px;width:1px;height:14px;background:#d4d0c8"></div>
<div class="a" style="left:145px;top:169px;width:1px;height:14px;background:#d4d0c8"></div>
<div class="a" style="left:345px;top:169px;width:1px;height:14px;background:#d4d0c8"></div>
<div class="a" style="left:420px;top:169px;width:1px;height:14px;background:#d4d0c8"></div>
<div class="a" style="left:455px;top:169px;width:1px;height:14px;background:#d4d0c8"></div>
<div class="a" style="left:525px;top:169px;width:1px;height:14px;background:#d4d0c8"></div>
<div class="a" style="left:565px;top:169px;width:1px;height:14px;background:#d4d0c8"></div>
<div class="a" style="left:600px;top:169px;width:1px;height:14px;background:#d4d0c8"></div>
<div class="a" style="left:670px;top:169px;width:1px;height:14px;background:#d4d0c8"></div>
<div class="a" style="left:710px;top:169px;width:1px;height:14px;background:#d4d0c8"></div>
<div class="a" style="left:735px;top:169px;width:1px;height:14px;background:#d4d0c8"></div>
<div class="a" style="left:785px;top:169px;width:1px;height:14px;background:#d4d0c8"></div>
<div class="a" style="left:835px;top:169px;width:1px;height:14px;background:#d4d0c8"></div>
<div class="a" style="left:890px;top:169px;width:1px;height:14px;background:#d4d0c8"></div>
<div class="a" style="left:955px;top:169px;width:1px;height:14px;background:#d4d0c8"></div>
<div class="a" style="left:1030px;top:169px;width:1px;height:14px;background:#d4d0c8"></div>
<div class="a" style="left:1055px;top:169px;width:1px;height:14px;background:#d4d0c8"></div>
<div class="a" style="left:1085px;top:169px;width:1px;height:14px;background:#d4d0c8"></div>
<div class="a" style="left:3.00px;top:170px;font-size:11px;transform:scaleX(0.8771);transform-origin:0 0;">DODGE GRAND CAR</div>
<div class="a" style="left:101px;top:178px;width:9px;height:2px;background:repeating-linear-gradient(90deg,#000 0 1px,transparent 1px 4px)"></div>
<div class="a" style="left:136.00px;top:170px;font-size:11px;">7</div>
<div class="a" style="left:148.00px;top:170px;font-size:11px;transform:scaleX(0.9218);transform-origin:0 0;">Van(Mini) - Gold GPS - Plus Excess Ref</div>
<div class="a" style="left:331px;top:178px;width:9px;height:2px;background:repeating-linear-gradient(90deg,#000 0 1px,transparent 1px 4px)"></div>
<div class="a" style="left:348.00px;top:170px;font-size:11px;transform:scaleX(0.9403);transform-origin:0 0;">Flexible Car</div>
<div class="a" style="left:406px;top:178px;width:9px;height:2px;background:repeating-linear-gradient(90deg,#000 0 1px,transparent 1px 4px)"></div>
<div class="a" style="left:423.00px;top:170px;font-size:11px;transform:scaleX(0.9124);transform-origin:0 0;">Sun</div>
<div class="a" style="left:458.00px;top:170px;font-size:11px;transform:scaleX(1.0103);transform-origin:0 0;">18/06/2017</div>
<div class="a" style="left:528.00px;top:170px;font-size:11px;transform:scaleX(0.9942);transform-origin:0 0;">12:00</div>
<div class="a" style="left:568.00px;top:170px;font-size:11px;transform:scaleX(0.9124);transform-origin:0 0;">Sun</div>
<div class="a" style="left:602.50px;top:170px;font-size:11px;transform:scaleX(1.0103);transform-origin:0 0;">02/07/2017</div>
<div class="a" style="left:673.00px;top:170px;font-size:11px;transform:scaleX(0.9942);transform-origin:0 0;">12:00</div>
<div class="a" style="left:721.50px;top:170px;font-size:11px;transform:scaleX(0.8871);transform-origin:0 0;">14</div>
<div class="a" style="left:738.00px;top:170px;font-size:11px;transform:scaleX(0.9203);transform-origin:0 0;">On Air</div>
<div class="a" style="left:769px;top:178px;width:9px;height:2px;background:repeating-linear-gradient(90deg,#000 0 1px,transparent 1px 4px)"></div>
<div class="a" style="left:788.00px;top:170px;font-size:11px;transform:scaleX(0.9203);transform-origin:0 0;">On Air</div>
<div class="a" style="left:819px;top:178px;width:9px;height:2px;background:repeating-linear-gradient(90deg,#000 0 1px,transparent 1px 4px)"></div>
<div class="a" style="left:853.25px;top:170px;font-size:11px;transform:scaleX(1.0067);transform-origin:0 0;">710.21</div>
<div class="a" style="left:918.25px;top:170px;font-size:11px;transform:scaleX(1.0067);transform-origin:0 0;">710.21</div>
<div class="a" style="left:958.00px;top:170px;font-size:11px;transform:scaleX(0.9256);transform-origin:0 0;">Alamo</div>
<div class="a" style="left:1033.00px;top:170px;font-size:11px;transform:scaleX(0.9366);transform-origin:0 0;">yes</div>
<div class="a" style="left:1058.00px;top:170px;font-size:11px;">auto</div>
<div class="a" style="left:1px;top:184px;width:1085px;height:14px;background:#b3dffd"></div>
<div class="a" style="left:1px;top:198px;width:1352px;height:1px;background:#d4d0c8"></div>
<div class="a" style="left:120px;top:184px;width:1px;height:14px;background:#d4d0c8"></div>
<div class="a" style="left:145px;top:184px;width:1px;height:14px;background:#d4d0c8"></div>
<div class="a" style="left:345px;top:184px;width:1px;height:14px;background:#d4d0c8"></div>
<div class="a" style="left:420px;top:184px;width:1px;height:14px;background:#d4d0c8"></div>
<div class="a" style="left:455px;top:184px;width:1px;height:14px;background:#d4d0c8"></div>
<div class="a" style="left:525px;top:184px;width:1px;height:14px;background:#d4d0c8"></div>
<div class="a" style="left:565px;top:184px;width:1px;height:14px;background:#d4d0c8"></div>
<div class="a" style="left:600px;top:184px;width:1px;height:14px;background:#d4d0c8"></div>
<div class="a" style="left:670px;top:184px;width:1px;height:14px;background:#d4d0c8"></div>
<div class="a" style="left:710px;top:184px;width:1px;height:14px;background:#d4d0c8"></div>
<div class="a" style="left:735px;top:184px;width:1px;height:14px;background:#d4d0c8"></div>
<div class="a" style="left:785px;top:184px;width:1px;height:14px;background:#d4d0c8"></div>
<div class="a" style="left:835px;top:184px;width:1px;height:14px;background:#d4d0c8"></div>
<div class="a" style="left:890px;top:184px;width:1px;height:14px;background:#d4d0c8"></div>
<div class="a" style="left:955px;top:184px;width:1px;height:14px;background:#d4d0c8"></div>
<div class="a" style="left:1030px;top:184px;width:1px;height:14px;background:#d4d0c8"></div>
<div class="a" style="left:1055px;top:184px;width:1px;height:14px;background:#d4d0c8"></div>
<div class="a" style="left:1085px;top:184px;width:1px;height:14px;background:#d4d0c8"></div>
<div class="a" style="left:3.00px;top:185px;font-size:11px;transform:scaleX(0.8782);transform-origin:0 0;">CHEVROLET TAHOE</div>
<div class="a" style="left:102px;top:193px;width:9px;height:2px;background:repeating-linear-gradient(90deg,#000 0 1px,transparent 1px 4px)"></div>
<div class="a" style="left:136.00px;top:185px;font-size:11px;">7</div>
<div class="a" style="left:148.00px;top:185px;font-size:11px;transform:scaleX(0.9238);transform-origin:0 0;">SUV(Full Size) - Gold - Plus Excess Ref</div>
<div class="a" style="left:331px;top:193px;width:9px;height:2px;background:repeating-linear-gradient(90deg,#000 0 1px,transparent 1px 4px)"></div>
<div class="a" style="left:348.00px;top:185px;font-size:11px;transform:scaleX(0.9403);transform-origin:0 0;">Flexible Car</div>
<div class="a" style="left:406px;top:193px;width:9px;height:2px;background:repeating-linear-gradient(90deg,#000 0 1px,transparent 1px 4px)"></div>
<div class="a" style="left:423.00px;top:185px;font-size:11px;transform:scaleX(0.9124);transform-origin:0 0;">Sun</div>
<div class="a" style="left:458.00px;top:185px;font-size:11px;transform:scaleX(1.0103);transform-origin:0 0;">18/06/2017</div>
<div class="a" style="left:528.00px;top:185px;font-size:11px;transform:scaleX(0.9942);transform-origin:0 0;">12:00</div>
<div class="a" style="left:568.00px;top:185px;font-size:11px;transform:scaleX(0.9124);transform-origin:0 0;">Sun</div>
<div class="a" style="left:602.50px;top:185px;font-size:11px;transform:scaleX(1.0103);transform-origin:0 0;">02/07/2017</div>
<div class="a" style="left:673.00px;top:185px;font-size:11px;transform:scaleX(0.9942);transform-origin:0 0;">12:00</div>
<div class="a" style="left:721.50px;top:185px;font-size:11px;transform:scaleX(0.8871);transform-origin:0 0;">14</div>
<div class="a" style="left:738.00px;top:185px;font-size:11px;transform:scaleX(0.9203);transform-origin:0 0;">On Air</div>
<div class="a" style="left:769px;top:193px;width:9px;height:2px;background:repeating-linear-gradient(90deg,#000 0 1px,transparent 1px 4px)"></div>
<div class="a" style="left:788.00px;top:185px;font-size:11px;transform:scaleX(0.9203);transform-origin:0 0;">On Air</div>
<div class="a" style="left:819px;top:193px;width:9px;height:2px;background:repeating-linear-gradient(90deg,#000 0 1px,transparent 1px 4px)"></div>
<div class="a" style="left:853.25px;top:185px;font-size:11px;transform:scaleX(1.0067);transform-origin:0 0;">725.49</div>
<div class="a" style="left:918.25px;top:185px;font-size:11px;transform:scaleX(1.0067);transform-origin:0 0;">725.49</div>
<div class="a" style="left:958.00px;top:185px;font-size:11px;transform:scaleX(0.9256);transform-origin:0 0;">Alamo</div>
<div class="a" style="left:1033.00px;top:185px;font-size:11px;transform:scaleX(0.9366);transform-origin:0 0;">yes</div>
<div class="a" style="left:1058.00px;top:185px;font-size:11px;">auto</div>
<div class="a" style="left:1px;top:199px;width:1085px;height:14px;background:#b3dffd"></div>
<div class="a" style="left:1px;top:213px;width:1352px;height:1px;background:#d4d0c8"></div>
<div class="a" style="left:120px;top:199px;width:1px;height:14px;background:#d4d0c8"></div>
<div class="a" style="left:145px;top:199px;width:1px;height:14px;background:#d4d0c8"></div>
<div class="a" style="left:345px;top:199px;width:1px;height:14px;background:#d4d0c8"></div>
<div class="a" style="left:420px;top:199px;width:1px;height:14px;background:#d4d0c8"></div>
<div class="a" style="left:455px;top:199px;width:1px;height:14px;background:#d4d0c8"></div>
<div class="a" style="left:525px;top:199px;width:1px;height:14px;background:#d4d0c8"></div>
<div class="a" style="left:565px;top:199px;width:1px;height:14px;background:#d4d0c8"></div>
<div class="a" style="left:600px;top:199px;width:1px;height:14px;background:#d4d0c8"></div>
<div class="a" style="left:670px;top:199px;width:1px;height:14px;background:#d4d0c8"></div>
<div class="a" style="left:710px;top:199px;width:1px;height:14px;background:#d4d0c8"></div>
<div class="a" style="left:735px;top:199px;width:1px;height:14px;background:#d4d0c8"></div>
<div class="a" style="left:785px;top:199px;width:1px;height:14px;background:#d4d0c8"></div>
<div class="a" style="left:835px;top:199px;width:1px;height:14px;background:#d4d0c8"></div>
<div class="a" style="left:890px;top:199px;width:1px;height:14px;background:#d4d0c8"></div>
<div class="a" style="left:955px;top:199px;width:1px;height:14px;background:#d4d0c8"></div>
<div class="a" style="left:1030px;top:199px;width:1px;height:14px;background:#d4d0c8"></div>
<div class="a" style="left:1055px;top:199px;width:1px;height:14px;background:#d4d0c8"></div>
<div class="a" style="left:1085px;top:199px;width:1px;height:14px;background:#d4d0c8"></div>
<div class="a" style="left:3.00px;top:200px;font-size:11px;transform:scaleX(0.8782);transform-origin:0 0;">CHEVROLET TAHOE</div>
<div class="a" style="left:102px;top:208px;width:9px;height:2px;background:repeating-linear-gradient(90deg,#000 0 1px,transparent 1px 4px)"></div>
<div class="a" style="left:136.00px;top:200px;font-size:11px;">7</div>
<div class="a" style="left:148.00px;top:200px;font-size:11px;transform:scaleX(0.9760);transform-origin:0 0;">SUV(Full Size) - Inclusive GPS</div>
<div class="a" style="left:348.00px;top:200px;font-size:11px;transform:scaleX(0.9403);transform-origin:0 0;">Flexible Car</div>
<div class="a" style="left:406px;top:208px;width:9px;height:2px;background:repeating-linear-gradient(90deg,#000 0 1px,transparent 1px 4px)"></div>
<div class="a" style="left:423.00px;top:200px;font-size:11px;transform:scaleX(0.9124);transform-origin:0 0;">Sun</div>
<div class="a" style="left:458.00px;top:200px;font-size:11px;transform:scaleX(1.0103);transform-origin:0 0;">18/06/2017</div>
<div class="a" style="left:528.00px;top:200px;font-size:11px;transform:scaleX(0.9942);transform-origin:0 0;">12:00</div>
<div class="a" style="left:568.00px;top:200px;font-size:11px;transform:scaleX(0.9124);transform-origin:0 0;">Sun</div>
<div class="a" style="left:602.50px;top:200px;font-size:11px;transform:scaleX(1.0103);transform-origin:0 0;">02/07/2017</div>
<div class="a" style="left:673.00px;top:200px;font-size:11px;transform:scaleX(0.9942);transform-origin:0 0;">12:00</div>
<div class="a" style="left:721.50px;top:200px;font-size:11px;transform:scaleX(0.8871);transform-origin:0 0;">14</div>
<div class="a" style="left:738.00px;top:200px;font-size:11px;transform:scaleX(0.9203);transform-origin:0 0;">On Air</div>
<div class="a" style="left:769px;top:208px;width:9px;height:2px;background:repeating-linear-gradient(90deg,#000 0 1px,transparent 1px 4px)"></div>
<div class="a" style="left:788.00px;top:200px;font-size:11px;transform:scaleX(0.9203);transform-origin:0 0;">On Air</div>
<div class="a" style="left:819px;top:208px;width:9px;height:2px;background:repeating-linear-gradient(90deg,#000 0 1px,transparent 1px 4px)"></div>
<div class="a" style="left:853.25px;top:200px;font-size:11px;transform:scaleX(1.0067);transform-origin:0 0;">744.62</div>
<div class="a" style="left:918.25px;top:200px;font-size:11px;transform:scaleX(1.0067);transform-origin:0 0;">744.62</div>
<div class="a" style="left:958.00px;top:200px;font-size:11px;transform:scaleX(0.9256);transform-origin:0 0;">Alamo</div>
<div class="a" style="left:1033.00px;top:200px;font-size:11px;transform:scaleX(0.9366);transform-origin:0 0;">yes</div>
<div class="a" style="left:1058.00px;top:200px;font-size:11px;">auto</div>
<div class="a" style="left:1px;top:214px;width:1085px;height:14px;background:#b3dffd"></div>
<div class="a" style="left:1px;top:228px;width:1352px;height:1px;background:#d4d0c8"></div>
<div class="a" style="left:120px;top:214px;width:1px;height:14px;background:#d4d0c8"></div>
<div class="a" style="left:145px;top:214px;width:1px;height:14px;background:#d4d0c8"></div>
<div class="a" style="left:345px;top:214px;width:1px;height:14px;background:#d4d0c8"></div>
<div class="a" style="left:420px;top:214px;width:1px;height:14px;background:#d4d0c8"></div>
<div class="a" style="left:455px;top:214px;width:1px;height:14px;background:#d4d0c8"></div>
<div class="a" style="left:525px;top:214px;width:1px;height:14px;background:#d4d0c8"></div>
<div class="a" style="left:565px;top:214px;width:1px;height:14px;background:#d4d0c8"></div>
<div class="a" style="left:600px;top:214px;width:1px;height:14px;background:#d4d0c8"></div>
<div class="a" style="left:670px;top:214px;width:1px;height:14px;background:#d4d0c8"></div>
<div class="a" style="left:710px;top:214px;width:1px;height:14px;background:#d4d0c8"></div>
<div class="a" style="left:735px;top:214px;width:1px;height:14px;background:#d4d0c8"></div>
<div class="a" style="left:785px;top:214px;width:1px;height:14px;background:#d4d0c8"></div>
<div class="a" style="left:835px;top:214px;width:1px;height:14px;background:#d4d0c8"></div>
<div class="a" style="left:890px;top:214px;width:1px;height:14px;background:#d4d0c8"></div>
<div class="a" style="left:955px;top:214px;width:1px;height:14px;background:#d4d0c8"></div>
<div class="a" style="left:1030px;top:214px;width:1px;height:14px;background:#d4d0c8"></div>
<div class="a" style="left:1055px;top:214px;width:1px;height:14px;background:#d4d0c8"></div>
<div class="a" style="left:1085px;top:214px;width:1px;height:14px;background:#d4d0c8"></div>
<div class="a" style="left:3.00px;top:215px;font-size:11px;transform:scaleX(0.8771);transform-origin:0 0;">DODGE GRAND CAR</div>
<div class="a" style="left:101px;top:223px;width:9px;height:2px;background:repeating-linear-gradient(90deg,#000 0 1px,transparent 1px 4px)"></div>
<div class="a" style="left:136.00px;top:215px;font-size:11px;">7</div>
<div class="a" style="left:148.00px;top:215px;font-size:11px;transform:scaleX(0.9760);transform-origin:0 0;">Van(Mini) - Inclusive product</div>
<div class="a" style="left:348.00px;top:215px;font-size:11px;transform:scaleX(0.9403);transform-origin:0 0;">Flexible Car</div>
<div class="a" style="left:406px;top:223px;width:9px;height:2px;background:repeating-linear-gradient(90deg,#000 0 1px,transparent 1px 4px)"></div>
<div class="a" style="left:423.00px;top:215px;font-size:11px;transform:scaleX(0.9124);transform-origin:0 0;">Sun</div>
<div class="a" style="left:458.00px;top:215px;font-size:11px;transform:scaleX(1.0103);transform-origin:0 0;">18/06/2017</div>
<div class="a" style="left:528.00px;top:215px;font-size:11px;transform:scaleX(0.9942);transform-origin:0 0;">12:00</div>
<div class="a" style="left:568.00px;top:215px;font-size:11px;transform:scaleX(0.9124);transform-origin:0 0;">Sun</div>
<div class="a" style="left:602.50px;top:215px;font-size:11px;transform:scaleX(1.0103);transform-origin:0 0;">02/07/2017</div>
<div class="a" style="left:673.00px;top:215px;font-size:11px;transform:scaleX(0.9942);transform-origin:0 0;">12:00</div>
<div class="a" style="left:721.50px;top:215px;font-size:11px;transform:scaleX(0.8871);transform-origin:0 0;">14</div>
<div class="a" style="left:738.00px;top:215px;font-size:11px;transform:scaleX(0.9203);transform-origin:0 0;">On Air</div>
<div class="a" style="left:769px;top:223px;width:9px;height:2px;background:repeating-linear-gradient(90deg,#000 0 1px,transparent 1px 4px)"></div>
<div class="a" style="left:788.00px;top:215px;font-size:11px;transform:scaleX(0.9203);transform-origin:0 0;">On Air</div>
<div class="a" style="left:819px;top:223px;width:9px;height:2px;background:repeating-linear-gradient(90deg,#000 0 1px,transparent 1px 4px)"></div>
<div class="a" style="left:853.25px;top:215px;font-size:11px;transform:scaleX(1.0067);transform-origin:0 0;">759.90</div>
<div class="a" style="left:918.25px;top:215px;font-size:11px;transform:scaleX(1.0067);transform-origin:0 0;">759.90</div>
<div class="a" style="left:958.00px;top:215px;font-size:11px;transform:scaleX(0.9256);transform-origin:0 0;">Alamo</div>
<div class="a" style="left:1033.00px;top:215px;font-size:11px;transform:scaleX(0.9366);transform-origin:0 0;">yes</div>
<div class="a" style="left:1058.00px;top:215px;font-size:11px;">auto</div>
<div class="a" style="left:1px;top:229px;width:1085px;height:14px;background:#b3dffd"></div>
<div class="a" style="left:1px;top:243px;width:1352px;height:1px;background:#d4d0c8"></div>
<div class="a" style="left:120px;top:229px;width:1px;height:14px;background:#d4d0c8"></div>
<div class="a" style="left:145px;top:229px;width:1px;height:14px;background:#d4d0c8"></div>
<div class="a" style="left:345px;top:229px;width:1px;height:14px;background:#d4d0c8"></div>
<div class="a" style="left:420px;top:229px;width:1px;height:14px;background:#d4d0c8"></div>
<div class="a" style="left:455px;top:229px;width:1px;height:14px;background:#d4d0c8"></div>
<div class="a" style="left:525px;top:229px;width:1px;height:14px;background:#d4d0c8"></div>
<div class="a" style="left:565px;top:229px;width:1px;height:14px;background:#d4d0c8"></div>
<div class="a" style="left:600px;top:229px;width:1px;height:14px;background:#d4d0c8"></div>
<div class="a" style="left:670px;top:229px;width:1px;height:14px;background:#d4d0c8"></div>
<div class="a" style="left:710px;top:229px;width:1px;height:14px;background:#d4d0c8"></div>
<div class="a" style="left:735px;top:229px;width:1px;height:14px;background:#d4d0c8"></div>
<div class="a" style="left:785px;top:229px;width:1px;height:14px;background:#d4d0c8"></div>
<div class="a" style="left:835px;top:229px;width:1px;height:14px;background:#d4d0c8"></div>
<div class="a" style="left:890px;top:229px;width:1px;height:14px;background:#d4d0c8"></div>
<div class="a" style="left:955px;top:229px;width:1px;height:14px;background:#d4d0c8"></div>
<div class="a" style="left:1030px;top:229px;width:1px;height:14px;background:#d4d0c8"></div>
<div class="a" style="left:1055px;top:229px;width:1px;height:14px;background:#d4d0c8"></div>
<div class="a" style="left:1085px;top:229px;width:1px;height:14px;background:#d4d0c8"></div>
<div class="a" style="left:3.00px;top:230px;font-size:11px;transform:scaleX(0.8771);transform-origin:0 0;">DODGE GRAND CAR</div>
<div class="a" style="left:101px;top:238px;width:9px;height:2px;background:repeating-linear-gradient(90deg,#000 0 1px,transparent 1px 4px)"></div>
<div class="a" style="left:136.00px;top:230px;font-size:11px;">7</div>
<div class="a" style="left:148.00px;top:230px;font-size:11px;transform:scaleX(0.9760);transform-origin:0 0;">Van(Mini) - Young Driver (age 24 or b</div>
<div class="a" style="left:327px;top:238px;width:9px;height:2px;background:repeating-linear-gradient(90deg,#000 0 1px,transparent 1px 4px)"></div>
<div class="a" style="left:348.00px;top:230px;font-size:11px;transform:scaleX(0.9403);transform-origin:0 0;">Flexible Car</div>
<div class="a" style="left:406px;top:238px;width:9px;height:2px;background:repeating-linear-gradient(90deg,#000 0 1px,transparent 1px 4px)"></div>
<div class="a" style="left:423.00px;top:230px;font-size:11px;transform:scaleX(0.9124);transform-origin:0 0;">Sun</div>
<div class="a" style="left:458.00px;top:230px;font-size:11px;transform:scaleX(1.0103);transform-origin:0 0;">18/06/2017</div>
<div class="a" style="left:528.00px;top:230px;font-size:11px;transform:scaleX(0.9942);transform-origin:0 0;">12:00</div>
<div class="a" style="left:568.00px;top:230px;font-size:11px;transform:scaleX(0.9124);transform-origin:0 0;">Sun</div>
<div class="a" style="left:602.50px;top:230px;font-size:11px;transform:scaleX(1.0103);transform-origin:0 0;">02/07/2017</div>
<div class="a" style="left:673.00px;top:230px;font-size:11px;transform:scaleX(0.9942);transform-origin:0 0;">12:00</div>
<div class="a" style="left:721.50px;top:230px;font-size:11px;transform:scaleX(0.8871);transform-origin:0 0;">14</div>
<div class="a" style="left:738.00px;top:230px;font-size:11px;transform:scaleX(0.9203);transform-origin:0 0;">On Air</div>
<div class="a" style="left:769px;top:238px;width:9px;height:2px;background:repeating-linear-gradient(90deg,#000 0 1px,transparent 1px 4px)"></div>
<div class="a" style="left:788.00px;top:230px;font-size:11px;transform:scaleX(0.9203);transform-origin:0 0;">On Air</div>
<div class="a" style="left:819px;top:238px;width:9px;height:2px;background:repeating-linear-gradient(90deg,#000 0 1px,transparent 1px 4px)"></div>
<div class="a" style="left:853.25px;top:230px;font-size:11px;transform:scaleX(1.0067);transform-origin:0 0;">759.90</div>
<div class="a" style="left:918.25px;top:230px;font-size:11px;transform:scaleX(1.0067);transform-origin:0 0;">759.90</div>
<div class="a" style="left:958.00px;top:230px;font-size:11px;transform:scaleX(0.9256);transform-origin:0 0;">Alamo</div>
<div class="a" style="left:1033.00px;top:230px;font-size:11px;transform:scaleX(0.9366);transform-origin:0 0;">yes</div>
<div class="a" style="left:1058.00px;top:230px;font-size:11px;">auto</div>
<div class="a" style="left:1px;top:244px;width:1085px;height:14px;background:#b3dffd"></div>
<div class="a" style="left:1px;top:258px;width:1352px;height:1px;background:#d4d0c8"></div>
<div class="a" style="left:120px;top:244px;width:1px;height:14px;background:#d4d0c8"></div>
<div class="a" style="left:145px;top:244px;width:1px;height:14px;background:#d4d0c8"></div>
<div class="a" style="left:345px;top:244px;width:1px;height:14px;background:#d4d0c8"></div>
<div class="a" style="left:420px;top:244px;width:1px;height:14px;background:#d4d0c8"></div>
<div class="a" style="left:455px;top:244px;width:1px;height:14px;background:#d4d0c8"></div>
<div class="a" style="left:525px;top:244px;width:1px;height:14px;background:#d4d0c8"></div>
<div class="a" style="left:565px;top:244px;width:1px;height:14px;background:#d4d0c8"></div>
<div class="a" style="left:600px;top:244px;width:1px;height:14px;background:#d4d0c8"></div>
<div class="a" style="left:670px;top:244px;width:1px;height:14px;background:#d4d0c8"></div>
<div class="a" style="left:710px;top:244px;width:1px;height:14px;background:#d4d0c8"></div>
<div class="a" style="left:735px;top:244px;width:1px;height:14px;background:#d4d0c8"></div>
<div class="a" style="left:785px;top:244px;width:1px;height:14px;background:#d4d0c8"></div>
<div class="a" style="left:835px;top:244px;width:1px;height:14px;background:#d4d0c8"></div>
<div class="a" style="left:890px;top:244px;width:1px;height:14px;background:#d4d0c8"></div>
<div class="a" style="left:955px;top:244px;width:1px;height:14px;background:#d4d0c8"></div>
<div class="a" style="left:1030px;top:244px;width:1px;height:14px;background:#d4d0c8"></div>
<div class="a" style="left:1055px;top:244px;width:1px;height:14px;background:#d4d0c8"></div>
<div class="a" style="left:1085px;top:244px;width:1px;height:14px;background:#d4d0c8"></div>
<div class="a" style="left:3.00px;top:245px;font-size:11px;transform:scaleX(0.8782);transform-origin:0 0;">CHEVROLET TAHOE</div>
<div class="a" style="left:102px;top:253px;width:9px;height:2px;background:repeating-linear-gradient(90deg,#000 0 1px,transparent 1px 4px)"></div>
<div class="a" style="left:136.00px;top:245px;font-size:11px;">7</div>
<div class="a" style="left:148.00px;top:245px;font-size:11px;transform:scaleX(0.9417);transform-origin:0 0;">SUV(Full Size) - Inclusive GPS - Plus E</div>
<div class="a" style="left:331px;top:253px;width:9px;height:2px;background:repeating-linear-gradient(90deg,#000 0 1px,transparent 1px 4px)"></div>
<div class="a" style="left:348.00px;top:245px;font-size:11px;transform:scaleX(0.9403);transform-origin:0 0;">Flexible Car</div>
<div class="a" style="left:406px;top:253px;width:9px;height:2px;background:repeating-linear-gradient(90deg,#000 0 1px,transparent 1px 4px)"></div>
<div class="a" style="left:423.00px;top:245px;font-size:11px;transform:scaleX(0.9124);transform-origin:0 0;">Sun</div>
<div class="a" style="left:458.00px;top:245px;font-size:11px;transform:scaleX(1.0103);transform-origin:0 0;">18/06/2017</div>
<div class="a" style="left:528.00px;top:245px;font-size:11px;transform:scaleX(0.9942);transform-origin:0 0;">12:00</div>
<div class="a" style="left:568.00px;top:245px;font-size:11px;transform:scaleX(0.9124);transform-origin:0 0;">Sun</div>
<div class="a" style="left:602.50px;top:245px;font-size:11px;transform:scaleX(1.0103);transform-origin:0 0;">02/07/2017</div>
<div class="a" style="left:673.00px;top:245px;font-size:11px;transform:scaleX(0.9942);transform-origin:0 0;">12:00</div>
<div class="a" style="left:721.50px;top:245px;font-size:11px;transform:scaleX(0.8871);transform-origin:0 0;">14</div>
<div class="a" style="left:738.00px;top:245px;font-size:11px;transform:scaleX(0.9203);transform-origin:0 0;">On Air</div>
<div class="a" style="left:769px;top:253px;width:9px;height:2px;background:repeating-linear-gradient(90deg,#000 0 1px,transparent 1px 4px)"></div>
<div class="a" style="left:788.00px;top:245px;font-size:11px;transform:scaleX(0.9203);transform-origin:0 0;">On Air</div>
<div class="a" style="left:819px;top:253px;width:9px;height:2px;background:repeating-linear-gradient(90deg,#000 0 1px,transparent 1px 4px)"></div>
<div class="a" style="left:853.25px;top:245px;font-size:11px;transform:scaleX(1.0318);transform-origin:0 0;">778.11</div>
<div class="a" style="left:918.25px;top:245px;font-size:11px;transform:scaleX(1.0318);transform-origin:0 0;">778.11</div>
<div class="a" style="left:958.00px;top:245px;font-size:11px;transform:scaleX(0.9256);transform-origin:0 0;">Alamo</div>
<div class="a" style="left:1033.00px;top:245px;font-size:11px;transform:scaleX(0.9366);transform-origin:0 0;">yes</div>
<div class="a" style="left:1058.00px;top:245px;font-size:11px;">auto</div>
<div class="a" style="left:1px;top:259px;width:1085px;height:14px;background:#b3dffd"></div>
<div class="a" style="left:1px;top:273px;width:1352px;height:1px;background:#d4d0c8"></div>
<div class="a" style="left:120px;top:259px;width:1px;height:14px;background:#d4d0c8"></div>
<div class="a" style="left:145px;top:259px;width:1px;height:14px;background:#d4d0c8"></div>
<div class="a" style="left:345px;top:259px;width:1px;height:14px;background:#d4d0c8"></div>
<div class="a" style="left:420px;top:259px;width:1px;height:14px;background:#d4d0c8"></div>
<div class="a" style="left:455px;top:259px;width:1px;height:14px;background:#d4d0c8"></div>
<div class="a" style="left:525px;top:259px;width:1px;height:14px;background:#d4d0c8"></div>
<div class="a" style="left:565px;top:259px;width:1px;height:14px;background:#d4d0c8"></div>
<div class="a" style="left:600px;top:259px;width:1px;height:14px;background:#d4d0c8"></div>
<div class="a" style="left:670px;top:259px;width:1px;height:14px;background:#d4d0c8"></div>
<div class="a" style="left:710px;top:259px;width:1px;height:14px;background:#d4d0c8"></div>
<div class="a" style="left:735px;top:259px;width:1px;height:14px;background:#d4d0c8"></div>
<div class="a" style="left:785px;top:259px;width:1px;height:14px;background:#d4d0c8"></div>
<div class="a" style="left:835px;top:259px;width:1px;height:14px;background:#d4d0c8"></div>
<div class="a" style="left:890px;top:259px;width:1px;height:14px;background:#d4d0c8"></div>
<div class="a" style="left:955px;top:259px;width:1px;height:14px;background:#d4d0c8"></div>
<div class="a" style="left:1030px;top:259px;width:1px;height:14px;background:#d4d0c8"></div>
<div class="a" style="left:1055px;top:259px;width:1px;height:14px;background:#d4d0c8"></div>
<div class="a" style="left:1085px;top:259px;width:1px;height:14px;background:#d4d0c8"></div>
<div class="a" style="left:3.00px;top:260px;font-size:11px;transform:scaleX(0.8782);transform-origin:0 0;">CHEVROLET TAHOE</div>
<div class="a" style="left:102px;top:268px;width:9px;height:2px;background:repeating-linear-gradient(90deg,#000 0 1px,transparent 1px 4px)"></div>
<div class="a" style="left:136.00px;top:260px;font-size:11px;">7</div>
<div class="a" style="left:148.00px;top:260px;font-size:11px;transform:scaleX(0.9760);transform-origin:0 0;">SUV(Full Size) - Gold GPS</div>
<div class="a" style="left:348.00px;top:260px;font-size:11px;transform:scaleX(0.9403);transform-origin:0 0;">Flexible Car</div>
<div class="a" style="left:406px;top:268px;width:9px;height:2px;background:repeating-linear-gradient(90deg,#000 0 1px,transparent 1px 4px)"></div>
<div class="a" style="left:423.00px;top:260px;font-size:11px;transform:scaleX(0.9124);transform-origin:0 0;">Sun</div>
<div class="a" style="left:458.00px;top:260px;font-size:11px;transform:scaleX(1.0103);transform-origin:0 0;">18/06/2017</div>
<div class="a" style="left:528.00px;top:260px;font-size:11px;transform:scaleX(0.9942);transform-origin:0 0;">12:00</div>
<div class="a" style="left:568.00px;top:260px;font-size:11px;transform:scaleX(0.9124);transform-origin:0 0;">Sun</div>
<div class="a" style="left:602.50px;top:260px;font-size:11px;transform:scaleX(1.0103);transform-origin:0 0;">02/07/2017</div>
<div class="a" style="left:673.00px;top:260px;font-size:11px;transform:scaleX(0.9942);transform-origin:0 0;">12:00</div>
<div class="a" style="left:721.50px;top:260px;font-size:11px;transform:scaleX(0.8871);transform-origin:0 0;">14</div>
<div class="a" style="left:738.00px;top:260px;font-size:11px;transform:scaleX(0.9203);transform-origin:0 0;">On Air</div>
<div class="a" style="left:769px;top:268px;width:9px;height:2px;background:repeating-linear-gradient(90deg,#000 0 1px,transparent 1px 4px)"></div>
<div class="a" style="left:788.00px;top:260px;font-size:11px;transform:scaleX(0.9203);transform-origin:0 0;">On Air</div>
<div class="a" style="left:819px;top:268px;width:9px;height:2px;background:repeating-linear-gradient(90deg,#000 0 1px,transparent 1px 4px)"></div>
<div class="a" style="left:853.25px;top:260px;font-size:11px;transform:scaleX(1.0067);transform-origin:0 0;">778.58</div>
<div class="a" style="left:918.25px;top:260px;font-size:11px;transform:scaleX(1.0067);transform-origin:0 0;">778.58</div>
<div class="a" style="left:958.00px;top:260px;font-size:11px;transform:scaleX(0.9256);transform-origin:0 0;">Alamo</div>
<div class="a" style="left:1033.00px;top:260px;font-size:11px;transform:scaleX(0.9366);transform-origin:0 0;">yes</div>
<div class="a" style="left:1058.00px;top:260px;font-size:11px;">auto</div>
<div class="a" style="left:1px;top:274px;width:1085px;height:14px;background:#b3dffd"></div>
<div class="a" style="left:1px;top:288px;width:1352px;height:1px;background:#d4d0c8"></div>
<div class="a" style="left:120px;top:274px;width:1px;height:14px;background:#d4d0c8"></div>
<div class="a" style="left:145px;top:274px;width:1px;height:14px;background:#d4d0c8"></div>
<div class="a" style="left:345px;top:274px;width:1px;height:14px;background:#d4d0c8"></div>
<div class="a" style="left:420px;top:274px;width:1px;height:14px;background:#d4d0c8"></div>
<div class="a" style="left:455px;top:274px;width:1px;height:14px;background:#d4d0c8"></div>
<div class="a" style="left:525px;top:274px;width:1px;height:14px;background:#d4d0c8"></div>
<div class="a" style="left:565px;top:274px;width:1px;height:14px;background:#d4d0c8"></div>
<div class="a" style="left:600px;top:274px;width:1px;height:14px;background:#d4d0c8"></div>
<div class="a" style="left:670px;top:274px;width:1px;height:14px;background:#d4d0c8"></div>
<div class="a" style="left:710px;top:274px;width:1px;height:14px;background:#d4d0c8"></div>
<div class="a" style="left:735px;top:274px;width:1px;height:14px;background:#d4d0c8"></div>
<div class="a" style="left:785px;top:274px;width:1px;height:14px;background:#d4d0c8"></div>
<div class="a" style="left:835px;top:274px;width:1px;height:14px;background:#d4d0c8"></div>
<div class="a" style="left:890px;top:274px;width:1px;height:14px;background:#d4d0c8"></div>
<div class="a" style="left:955px;top:274px;width:1px;height:14px;background:#d4d0c8"></div>
<div class="a" style="left:1030px;top:274px;width:1px;height:14px;background:#d4d0c8"></div>
<div class="a" style="left:1055px;top:274px;width:1px;height:14px;background:#d4d0c8"></div>
<div class="a" style="left:1085px;top:274px;width:1px;height:14px;background:#d4d0c8"></div>
<div class="a" style="left:3.00px;top:275px;font-size:11px;transform:scaleX(0.8771);transform-origin:0 0;">DODGE GRAND CAR</div>
<div class="a" style="left:101px;top:283px;width:9px;height:2px;background:repeating-linear-gradient(90deg,#000 0 1px,transparent 1px 4px)"></div>
<div class="a" style="left:136.00px;top:275px;font-size:11px;">7</div>
<div class="a" style="left:148.00px;top:275px;font-size:11px;transform:scaleX(0.9724);transform-origin:0 0;">Van(Mini) - Inclusive product - Plus Ex</div>
<div class="a" style="left:331px;top:283px;width:9px;height:2px;background:repeating-linear-gradient(90deg,#000 0 1px,transparent 1px 4px)"></div>
<div class="a" style="left:348.00px;top:275px;font-size:11px;transform:scaleX(0.9403);transform-origin:0 0;">Flexible Car</div>
<div class="a" style="left:406px;top:283px;width:9px;height:2px;background:repeating-linear-gradient(90deg,#000 0 1px,transparent 1px 4px)"></div>
<div class="a" style="left:423.00px;top:275px;font-size:11px;transform:scaleX(0.9124);transform-origin:0 0;">Sun</div>
<div class="a" style="left:458.00px;top:275px;font-size:11px;transform:scaleX(1.0103);transform-origin:0 0;">18/06/2017</div>
<div class="a" style="left:528.00px;top:275px;font-size:11px;transform:scaleX(0.9942);transform-origin:0 0;">12:00</div>
<div class="a" style="left:568.00px;top:275px;font-size:11px;transform:scaleX(0.9124);transform-origin:0 0;">Sun</div>
<div class="a" style="left:602.50px;top:275px;font-size:11px;transform:scaleX(1.0103);transform-origin:0 0;">02/07/2017</div>
<div class="a" style="left:673.00px;top:275px;font-size:11px;transform:scaleX(0.9942);transform-origin:0 0;">12:00</div>
<div class="a" style="left:721.50px;top:275px;font-size:11px;transform:scaleX(0.8871);transform-origin:0 0;">14</div>
<div class="a" style="left:738.00px;top:275px;font-size:11px;transform:scaleX(0.9203);transform-origin:0 0;">On Air</div>
<div class="a" style="left:769px;top:283px;width:9px;height:2px;background:repeating-linear-gradient(90deg,#000 0 1px,transparent 1px 4px)"></div>
<div class="a" style="left:788.00px;top:275px;font-size:11px;transform:scaleX(0.9203);transform-origin:0 0;">On Air</div>
<div class="a" style="left:819px;top:283px;width:9px;height:2px;background:repeating-linear-gradient(90deg,#000 0 1px,transparent 1px 4px)"></div>
<div class="a" style="left:853.25px;top:275px;font-size:11px;transform:scaleX(1.0067);transform-origin:0 0;">793.39</div>
<div class="a" style="left:918.25px;top:275px;font-size:11px;transform:scaleX(1.0067);transform-origin:0 0;">793.39</div>
<div class="a" style="left:958.00px;top:275px;font-size:11px;transform:scaleX(0.9256);transform-origin:0 0;">Alamo</div>
<div class="a" style="left:1033.00px;top:275px;font-size:11px;transform:scaleX(0.9366);transform-origin:0 0;">yes</div>
<div class="a" style="left:1058.00px;top:275px;font-size:11px;">auto</div>
<div class="a" style="left:1px;top:289px;width:1085px;height:14px;background:#b3dffd"></div>
<div class="a" style="left:1px;top:303px;width:1352px;height:1px;background:#d4d0c8"></div>
<div class="a" style="left:120px;top:289px;width:1px;height:14px;background:#d4d0c8"></div>
<div class="a" style="left:145px;top:289px;width:1px;height:14px;background:#d4d0c8"></div>
<div class="a" style="left:345px;top:289px;width:1px;height:14px;background:#d4d0c8"></div>
<div class="a" style="left:420px;top:289px;width:1px;height:14px;background:#d4d0c8"></div>
<div class="a" style="left:455px;top:289px;width:1px;height:14px;background:#d4d0c8"></div>
<div class="a" style="left:525px;top:289px;width:1px;height:14px;background:#d4d0c8"></div>
<div class="a" style="left:565px;top:289px;width:1px;height:14px;background:#d4d0c8"></div>
<div class="a" style="left:600px;top:289px;width:1px;height:14px;background:#d4d0c8"></div>
<div class="a" style="left:670px;top:289px;width:1px;height:14px;background:#d4d0c8"></div>
<div class="a" style="left:710px;top:289px;width:1px;height:14px;background:#d4d0c8"></div>
<div class="a" style="left:735px;top:289px;width:1px;height:14px;background:#d4d0c8"></div>
<div class="a" style="left:785px;top:289px;width:1px;height:14px;background:#d4d0c8"></div>
<div class="a" style="left:835px;top:289px;width:1px;height:14px;background:#d4d0c8"></div>
<div class="a" style="left:890px;top:289px;width:1px;height:14px;background:#d4d0c8"></div>
<div class="a" style="left:955px;top:289px;width:1px;height:14px;background:#d4d0c8"></div>
<div class="a" style="left:1030px;top:289px;width:1px;height:14px;background:#d4d0c8"></div>
<div class="a" style="left:1055px;top:289px;width:1px;height:14px;background:#d4d0c8"></div>
<div class="a" style="left:1085px;top:289px;width:1px;height:14px;background:#d4d0c8"></div>
<div class="a" style="left:3.00px;top:290px;font-size:11px;transform:scaleX(0.8771);transform-origin:0 0;">DODGE GRAND CAR</div>
<div class="a" style="left:101px;top:298px;width:9px;height:2px;background:repeating-linear-gradient(90deg,#000 0 1px,transparent 1px 4px)"></div>
<div class="a" style="left:136.00px;top:290px;font-size:11px;">7</div>
<div class="a" style="left:148.00px;top:290px;font-size:11px;transform:scaleX(0.9760);transform-origin:0 0;">Van(Mini) - Young Driver (age 24 or b</div>
<div class="a" style="left:327px;top:298px;width:9px;height:2px;background:repeating-linear-gradient(90deg,#000 0 1px,transparent 1px 4px)"></div>
<div class="a" style="left:348.00px;top:290px;font-size:11px;transform:scaleX(0.9403);transform-origin:0 0;">Flexible Car</div>
<div class="a" style="left:406px;top:298px;width:9px;height:2px;background:repeating-linear-gradient(90deg,#000 0 1px,transparent 1px 4px)"></div>
<div class="a" style="left:423.00px;top:290px;font-size:11px;transform:scaleX(0.9124);transform-origin:0 0;">Sun</div>
<div class="a" style="left:458.00px;top:290px;font-size:11px;transform:scaleX(1.0103);transform-origin:0 0;">18/06/2017</div>
<div class="a" style="left:528.00px;top:290px;font-size:11px;transform:scaleX(0.9942);transform-origin:0 0;">12:00</div>
<div class="a" style="left:568.00px;top:290px;font-size:11px;transform:scaleX(0.9124);transform-origin:0 0;">Sun</div>
<div class="a" style="left:602.50px;top:290px;font-size:11px;transform:scaleX(1.0103);transform-origin:0 0;">02/07/2017</div>
<div class="a" style="left:673.00px;top:290px;font-size:11px;transform:scaleX(0.9942);transform-origin:0 0;">12:00</div>
<div class="a" style="left:721.50px;top:290px;font-size:11px;transform:scaleX(0.8871);transform-origin:0 0;">14</div>
<div class="a" style="left:738.00px;top:290px;font-size:11px;transform:scaleX(0.9203);transform-origin:0 0;">On Air</div>
<div class="a" style="left:769px;top:298px;width:9px;height:2px;background:repeating-linear-gradient(90deg,#000 0 1px,transparent 1px 4px)"></div>
<div class="a" style="left:788.00px;top:290px;font-size:11px;transform:scaleX(0.9203);transform-origin:0 0;">On Air</div>
<div class="a" style="left:819px;top:298px;width:9px;height:2px;background:repeating-linear-gradient(90deg,#000 0 1px,transparent 1px 4px)"></div>
<div class="a" style="left:853.25px;top:290px;font-size:11px;transform:scaleX(1.0067);transform-origin:0 0;">793.39</div>
<div class="a" style="left:918.25px;top:290px;font-size:11px;transform:scaleX(1.0067);transform-origin:0 0;">793.39</div>
<div class="a" style="left:958.00px;top:290px;font-size:11px;transform:scaleX(0.9256);transform-origin:0 0;">Alamo</div>
<div class="a" style="left:1033.00px;top:290px;font-size:11px;transform:scaleX(0.9366);transform-origin:0 0;">yes</div>
<div class="a" style="left:1058.00px;top:290px;font-size:11px;">auto</div>
<div class="a" style="left:1px;top:304px;width:1085px;height:14px;background:#b3dffd"></div>
<div class="a" style="left:1px;top:318px;width:1352px;height:1px;background:#d4d0c8"></div>
<div class="a" style="left:120px;top:304px;width:1px;height:14px;background:#d4d0c8"></div>
<div class="a" style="left:145px;top:304px;width:1px;height:14px;background:#d4d0c8"></div>
<div class="a" style="left:345px;top:304px;width:1px;height:14px;background:#d4d0c8"></div>
<div class="a" style="left:420px;top:304px;width:1px;height:14px;background:#d4d0c8"></div>
<div class="a" style="left:455px;top:304px;width:1px;height:14px;background:#d4d0c8"></div>
<div class="a" style="left:525px;top:304px;width:1px;height:14px;background:#d4d0c8"></div>
<div class="a" style="left:565px;top:304px;width:1px;height:14px;background:#d4d0c8"></div>
<div class="a" style="left:600px;top:304px;width:1px;height:14px;background:#d4d0c8"></div>
<div class="a" style="left:670px;top:304px;width:1px;height:14px;background:#d4d0c8"></div>
<div class="a" style="left:710px;top:304px;width:1px;height:14px;background:#d4d0c8"></div>
<div class="a" style="left:735px;top:304px;width:1px;height:14px;background:#d4d0c8"></div>
<div class="a" style="left:785px;top:304px;width:1px;height:14px;background:#d4d0c8"></div>
<div class="a" style="left:835px;top:304px;width:1px;height:14px;background:#d4d0c8"></div>
<div class="a" style="left:890px;top:304px;width:1px;height:14px;background:#d4d0c8"></div>
<div class="a" style="left:955px;top:304px;width:1px;height:14px;background:#d4d0c8"></div>
<div class="a" style="left:1030px;top:304px;width:1px;height:14px;background:#d4d0c8"></div>
<div class="a" style="left:1055px;top:304px;width:1px;height:14px;background:#d4d0c8"></div>
<div class="a" style="left:1085px;top:304px;width:1px;height:14px;background:#d4d0c8"></div>
<div class="a" style="left:3.00px;top:305px;font-size:11px;transform:scaleX(0.8782);transform-origin:0 0;">CHEVROLET TAHOE</div>
<div class="a" style="left:102px;top:313px;width:9px;height:2px;background:repeating-linear-gradient(90deg,#000 0 1px,transparent 1px 4px)"></div>
<div class="a" style="left:136.00px;top:305px;font-size:11px;">7</div>
<div class="a" style="left:148.00px;top:305px;font-size:11px;transform:scaleX(0.9230);transform-origin:0 0;">SUV(Full Size) - Gold GPS - Plus Exces</div>
<div class="a" style="left:331px;top:313px;width:9px;height:2px;background:repeating-linear-gradient(90deg,#000 0 1px,transparent 1px 4px)"></div>
<div class="a" style="left:348.00px;top:305px;font-size:11px;transform:scaleX(0.9403);transform-origin:0 0;">Flexible Car</div>
<div class="a" style="left:406px;top:313px;width:9px;height:2px;background:repeating-linear-gradient(90deg,#000 0 1px,transparent 1px 4px)"></div>
<div class="a" style="left:423.00px;top:305px;font-size:11px;transform:scaleX(0.9124);transform-origin:0 0;">Sun</div>
<div class="a" style="left:458.00px;top:305px;font-size:11px;transform:scaleX(1.0103);transform-origin:0 0;">18/06/2017</div>
<div class="a" style="left:528.00px;top:305px;font-size:11px;transform:scaleX(0.9942);transform-origin:0 0;">12:00</div>
<div class="a" style="left:568.00px;top:305px;font-size:11px;transform:scaleX(0.9124);transform-origin:0 0;">Sun</div>
<div class="a" style="left:602.50px;top:305px;font-size:11px;transform:scaleX(1.0103);transform-origin:0 0;">02/07/2017</div>
<div class="a" style="left:673.00px;top:305px;font-size:11px;transform:scaleX(0.9942);transform-origin:0 0;">12:00</div>
<div class="a" style="left:721.50px;top:305px;font-size:11px;transform:scaleX(0.8871);transform-origin:0 0;">14</div>
<div class="a" style="left:738.00px;top:305px;font-size:11px;transform:scaleX(0.9203);transform-origin:0 0;">On Air</div>
<div class="a" style="left:769px;top:313px;width:9px;height:2px;background:repeating-linear-gradient(90deg,#000 0 1px,transparent 1px 4px)"></div>
<div class="a" style="left:788.00px;top:305px;font-size:11px;transform:scaleX(0.9203);transform-origin:0 0;">On Air</div>
<div class="a" style="left:819px;top:313px;width:9px;height:2px;background:repeating-linear-gradient(90deg,#000 0 1px,transparent 1px 4px)"></div>
<div class="a" style="left:853.25px;top:305px;font-size:11px;transform:scaleX(1.0067);transform-origin:0 0;">812.06</div>
<div class="a" style="left:918.25px;top:305px;font-size:11px;transform:scaleX(1.0067);transform-origin:0 0;">812.06</div>
<div class="a" style="left:958.00px;top:305px;font-size:11px;transform:scaleX(0.9256);transform-origin:0 0;">Alamo</div>
<div class="a" style="left:1033.00px;top:305px;font-size:11px;transform:scaleX(0.9366);transform-origin:0 0;">yes</div>
<div class="a" style="left:1058.00px;top:305px;font-size:11px;">auto</div>
<div class="a" style="left:1px;top:319px;width:1085px;height:14px;background:#b3dffd"></div>
<div class="a" style="left:1px;top:333px;width:1352px;height:1px;background:#d4d0c8"></div>
<div class="a" style="left:120px;top:319px;width:1px;height:14px;background:#d4d0c8"></div>
<div class="a" style="left:145px;top:319px;width:1px;height:14px;background:#d4d0c8"></div>
<div class="a" style="left:345px;top:319px;width:1px;height:14px;background:#d4d0c8"></div>
<div class="a" style="left:420px;top:319px;width:1px;height:14px;background:#d4d0c8"></div>
<div class="a" style="left:455px;top:319px;width:1px;height:14px;background:#d4d0c8"></div>
<div class="a" style="left:525px;top:319px;width:1px;height:14px;background:#d4d0c8"></div>
<div class="a" style="left:565px;top:319px;width:1px;height:14px;background:#d4d0c8"></div>
<div class="a" style="left:600px;top:319px;width:1px;height:14px;background:#d4d0c8"></div>
<div class="a" style="left:670px;top:319px;width:1px;height:14px;background:#d4d0c8"></div>
<div class="a" style="left:710px;top:319px;width:1px;height:14px;background:#d4d0c8"></div>
<div class="a" style="left:735px;top:319px;width:1px;height:14px;background:#d4d0c8"></div>
<div class="a" style="left:785px;top:319px;width:1px;height:14px;background:#d4d0c8"></div>
<div class="a" style="left:835px;top:319px;width:1px;height:14px;background:#d4d0c8"></div>
<div class="a" style="left:890px;top:319px;width:1px;height:14px;background:#d4d0c8"></div>
<div class="a" style="left:955px;top:319px;width:1px;height:14px;background:#d4d0c8"></div>
<div class="a" style="left:1030px;top:319px;width:1px;height:14px;background:#d4d0c8"></div>
<div class="a" style="left:1055px;top:319px;width:1px;height:14px;background:#d4d0c8"></div>
<div class="a" style="left:1085px;top:319px;width:1px;height:14px;background:#d4d0c8"></div>
<div class="a" style="left:3.00px;top:320px;font-size:11px;transform:scaleX(0.9088);transform-origin:0 0;">TOYOTA SIENNA OR</div>
<div class="a" style="left:106px;top:328px;width:9px;height:2px;background:repeating-linear-gradient(90deg,#000 0 1px,transparent 1px 4px)"></div>
<div class="a" style="left:136.00px;top:320px;font-size:11px;">8</div>
<div class="a" style="left:148.00px;top:320px;font-size:11px;transform:scaleX(0.9760);transform-origin:0 0;">Van(Standard) - Inclusive product</div>
<div class="a" style="left:348.00px;top:320px;font-size:11px;transform:scaleX(0.9403);transform-origin:0 0;">Flexible Car</div>
<div class="a" style="left:406px;top:328px;width:9px;height:2px;background:repeating-linear-gradient(90deg,#000 0 1px,transparent 1px 4px)"></div>
<div class="a" style="left:423.00px;top:320px;font-size:11px;transform:scaleX(0.9124);transform-origin:0 0;">Sun</div>
<div class="a" style="left:458.00px;top:320px;font-size:11px;transform:scaleX(1.0103);transform-origin:0 0;">18/06/2017</div>
<div class="a" style="left:528.00px;top:320px;font-size:11px;transform:scaleX(0.9942);transform-origin:0 0;">12:00</div>
<div class="a" style="left:568.00px;top:320px;font-size:11px;transform:scaleX(0.9124);transform-origin:0 0;">Sun</div>
<div class="a" style="left:602.50px;top:320px;font-size:11px;transform:scaleX(1.0103);transform-origin:0 0;">02/07/2017</div>
<div class="a" style="left:673.00px;top:320px;font-size:11px;transform:scaleX(0.9942);transform-origin:0 0;">12:00</div>
<div class="a" style="left:721.50px;top:320px;font-size:11px;transform:scaleX(0.8871);transform-origin:0 0;">14</div>
<div class="a" style="left:738.00px;top:320px;font-size:11px;transform:scaleX(0.9203);transform-origin:0 0;">On Air</div>
<div class="a" style="left:769px;top:328px;width:9px;height:2px;background:repeating-linear-gradient(90deg,#000 0 1px,transparent 1px 4px)"></div>
<div class="a" style="left:788.00px;top:320px;font-size:11px;transform:scaleX(0.9203);transform-origin:0 0;">On Air</div>
<div class="a" style="left:819px;top:328px;width:9px;height:2px;background:repeating-linear-gradient(90deg,#000 0 1px,transparent 1px 4px)"></div>
<div class="a" style="left:853.25px;top:320px;font-size:11px;transform:scaleX(1.0067);transform-origin:0 0;">815.14</div>
<div class="a" style="left:918.25px;top:320px;font-size:11px;transform:scaleX(1.0067);transform-origin:0 0;">815.14</div>
<div class="a" style="left:958.00px;top:320px;font-size:11px;transform:scaleX(0.9256);transform-origin:0 0;">Alamo</div>
<div class="a" style="left:1033.00px;top:320px;font-size:11px;transform:scaleX(0.9366);transform-origin:0 0;">yes</div>
<div class="a" style="left:1058.00px;top:320px;font-size:11px;">auto</div>
<div class="a" style="left:1px;top:334px;width:1085px;height:14px;background:#b3dffd"></div>
<div class="a" style="left:1px;top:348px;width:1352px;height:1px;background:#d4d0c8"></div>
<div class="a" style="left:120px;top:334px;width:1px;height:14px;background:#d4d0c8"></div>
<div class="a" style="left:145px;top:334px;width:1px;height:14px;background:#d4d0c8"></div>
<div class="a" style="left:345px;top:334px;width:1px;height:14px;background:#d4d0c8"></div>
<div class="a" style="left:420px;top:334px;width:1px;height:14px;background:#d4d0c8"></div>
<div class="a" style="left:455px;top:334px;width:1px;height:14px;background:#d4d0c8"></div>
<div class="a" style="left:525px;top:334px;width:1px;height:14px;background:#d4d0c8"></div>
<div class="a" style="left:565px;top:334px;width:1px;height:14px;background:#d4d0c8"></div>
<div class="a" style="left:600px;top:334px;width:1px;height:14px;background:#d4d0c8"></div>
<div class="a" style="left:670px;top:334px;width:1px;height:14px;background:#d4d0c8"></div>
<div class="a" style="left:710px;top:334px;width:1px;height:14px;background:#d4d0c8"></div>
<div class="a" style="left:735px;top:334px;width:1px;height:14px;background:#d4d0c8"></div>
<div class="a" style="left:785px;top:334px;width:1px;height:14px;background:#d4d0c8"></div>
<div class="a" style="left:835px;top:334px;width:1px;height:14px;background:#d4d0c8"></div>
<div class="a" style="left:890px;top:334px;width:1px;height:14px;background:#d4d0c8"></div>
<div class="a" style="left:955px;top:334px;width:1px;height:14px;background:#d4d0c8"></div>
<div class="a" style="left:1030px;top:334px;width:1px;height:14px;background:#d4d0c8"></div>
<div class="a" style="left:1055px;top:334px;width:1px;height:14px;background:#d4d0c8"></div>
<div class="a" style="left:1085px;top:334px;width:1px;height:14px;background:#d4d0c8"></div>
<div class="a" style="left:3.00px;top:335px;font-size:11px;transform:scaleX(0.9088);transform-origin:0 0;">TOYOTA SIENNA OR</div>
<div class="a" style="left:106px;top:343px;width:9px;height:2px;background:repeating-linear-gradient(90deg,#000 0 1px,transparent 1px 4px)"></div>
<div class="a" style="left:136.00px;top:335px;font-size:11px;">8</div>
<div class="a" style="left:148.00px;top:335px;font-size:11px;transform:scaleX(0.9760);transform-origin:0 0;">Van(Standard) - Inclusive product - Pl</div>
<div class="a" style="left:328px;top:343px;width:9px;height:2px;background:repeating-linear-gradient(90deg,#000 0 1px,transparent 1px 4px)"></div>
<div class="a" style="left:348.00px;top:335px;font-size:11px;transform:scaleX(0.9403);transform-origin:0 0;">Flexible Car</div>
<div class="a" style="left:406px;top:343px;width:9px;height:2px;background:repeating-linear-gradient(90deg,#000 0 1px,transparent 1px 4px)"></div>
<div class="a" style="left:423.00px;top:335px;font-size:11px;transform:scaleX(0.9124);transform-origin:0 0;">Sun</div>
<div class="a" style="left:458.00px;top:335px;font-size:11px;transform:scaleX(1.0103);transform-origin:0 0;">18/06/2017</div>
<div class="a" style="left:528.00px;top:335px;font-size:11px;transform:scaleX(0.9942);transform-origin:0 0;">12:00</div>
<div class="a" style="left:568.00px;top:335px;font-size:11px;transform:scaleX(0.9124);transform-origin:0 0;">Sun</div>
<div class="a" style="left:602.50px;top:335px;font-size:11px;transform:scaleX(1.0103);transform-origin:0 0;">02/07/2017</div>
<div class="a" style="left:673.00px;top:335px;font-size:11px;transform:scaleX(0.9942);transform-origin:0 0;">12:00</div>
<div class="a" style="left:721.50px;top:335px;font-size:11px;transform:scaleX(0.8871);transform-origin:0 0;">14</div>
<div class="a" style="left:738.00px;top:335px;font-size:11px;transform:scaleX(0.9203);transform-origin:0 0;">On Air</div>
<div class="a" style="left:769px;top:343px;width:9px;height:2px;background:repeating-linear-gradient(90deg,#000 0 1px,transparent 1px 4px)"></div>
<div class="a" style="left:788.00px;top:335px;font-size:11px;transform:scaleX(0.9203);transform-origin:0 0;">On Air</div>
<div class="a" style="left:819px;top:343px;width:9px;height:2px;background:repeating-linear-gradient(90deg,#000 0 1px,transparent 1px 4px)"></div>
<div class="a" style="left:853.25px;top:335px;font-size:11px;transform:scaleX(1.0067);transform-origin:0 0;">848.62</div>
<div class="a" style="left:918.25px;top:335px;font-size:11px;transform:scaleX(1.0067);transform-origin:0 0;">848.62</div>
<div class="a" style="left:958.00px;top:335px;font-size:11px;transform:scaleX(0.9256);transform-origin:0 0;">Alamo</div>
<div class="a" style="left:1033.00px;top:335px;font-size:11px;transform:scaleX(0.9366);transform-origin:0 0;">yes</div>
<div class="a" style="left:1058.00px;top:335px;font-size:11px;">auto</div>
<div class="a" style="left:1px;top:349px;width:1085px;height:14px;background:#b3dffd"></div>
<div class="a" style="left:1px;top:363px;width:1352px;height:1px;background:#d4d0c8"></div>
<div class="a" style="left:120px;top:349px;width:1px;height:14px;background:#d4d0c8"></div>
<div class="a" style="left:145px;top:349px;width:1px;height:14px;background:#d4d0c8"></div>
<div class="a" style="left:345px;top:349px;width:1px;height:14px;background:#d4d0c8"></div>
<div class="a" style="left:420px;top:349px;width:1px;height:14px;background:#d4d0c8"></div>
<div class="a" style="left:455px;top:349px;width:1px;height:14px;background:#d4d0c8"></div>
<div class="a" style="left:525px;top:349px;width:1px;height:14px;background:#d4d0c8"></div>
<div class="a" style="left:565px;top:349px;width:1px;height:14px;background:#d4d0c8"></div>
<div class="a" style="left:600px;top:349px;width:1px;height:14px;background:#d4d0c8"></div>
<div class="a" style="left:670px;top:349px;width:1px;height:14px;background:#d4d0c8"></div>
<div class="a" style="left:710px;top:349px;width:1px;height:14px;background:#d4d0c8"></div>
<div class="a" style="left:735px;top:349px;width:1px;height:14px;background:#d4d0c8"></div>
<div class="a" style="left:785px;top:349px;width:1px;height:14px;background:#d4d0c8"></div>
<div class="a" style="left:835px;top:349px;width:1px;height:14px;background:#d4d0c8"></div>
<div class="a" style="left:890px;top:349px;width:1px;height:14px;background:#d4d0c8"></div>
<div class="a" style="left:955px;top:349px;width:1px;height:14px;background:#d4d0c8"></div>
<div class="a" style="left:1030px;top:349px;width:1px;height:14px;background:#d4d0c8"></div>
<div class="a" style="left:1055px;top:349px;width:1px;height:14px;background:#d4d0c8"></div>
<div class="a" style="left:1085px;top:349px;width:1px;height:14px;background:#d4d0c8"></div>
<div class="a" style="left:3.00px;top:350px;font-size:11px;transform:scaleX(0.8782);transform-origin:0 0;">CHEVROLET TAHOE</div>
<div class="a" style="left:102px;top:358px;width:9px;height:2px;background:repeating-linear-gradient(90deg,#000 0 1px,transparent 1px 4px)"></div>
<div class="a" style="left:136.00px;top:350px;font-size:11px;">7</div>
<div class="a" style="left:148.00px;top:350px;font-size:11px;transform:scaleX(0.9760);transform-origin:0 0;">SUV(Full Size) - Inclusive product</div>
<div class="a" style="left:348.00px;top:350px;font-size:11px;transform:scaleX(0.9403);transform-origin:0 0;">Flexible Car</div>
<div class="a" style="left:406px;top:358px;width:9px;height:2px;background:repeating-linear-gradient(90deg,#000 0 1px,transparent 1px 4px)"></div>
<div class="a" style="left:423.00px;top:350px;font-size:11px;transform:scaleX(0.9124);transform-origin:0 0;">Sun</div>
<div class="a" style="left:458.00px;top:350px;font-size:11px;transform:scaleX(1.0103);transform-origin:0 0;">18/06/2017</div>
<div class="a" style="left:528.00px;top:350px;font-size:11px;transform:scaleX(0.9942);transform-origin:0 0;">12:00</div>
<div class="a" style="left:568.00px;top:350px;font-size:11px;transform:scaleX(0.9124);transform-origin:0 0;">Sun</div>
<div class="a" style="left:602.50px;top:350px;font-size:11px;transform:scaleX(1.0103);transform-origin:0 0;">02/07/2017</div>
<div class="a" style="left:673.00px;top:350px;font-size:11px;transform:scaleX(0.9942);transform-origin:0 0;">12:00</div>
<div class="a" style="left:721.50px;top:350px;font-size:11px;transform:scaleX(0.8871);transform-origin:0 0;">14</div>
<div class="a" style="left:738.00px;top:350px;font-size:11px;transform:scaleX(0.9203);transform-origin:0 0;">On Air</div>
<div class="a" style="left:769px;top:358px;width:9px;height:2px;background:repeating-linear-gradient(90deg,#000 0 1px,transparent 1px 4px)"></div>
<div class="a" style="left:788.00px;top:350px;font-size:11px;transform:scaleX(0.9203);transform-origin:0 0;">On Air</div>
<div class="a" style="left:819px;top:358px;width:9px;height:2px;background:repeating-linear-gradient(90deg,#000 0 1px,transparent 1px 4px)"></div>
<div class="a" style="left:853.25px;top:350px;font-size:11px;transform:scaleX(1.0067);transform-origin:0 0;">861.74</div>
<div class="a" style="left:918.25px;top:350px;font-size:11px;transform:scaleX(1.0067);transform-origin:0 0;">861.74</div>
<div class="a" style="left:958.00px;top:350px;font-size:11px;transform:scaleX(0.9256);transform-origin:0 0;">Alamo</div>
<div class="a" style="left:1033.00px;top:350px;font-size:11px;transform:scaleX(0.9366);transform-origin:0 0;">yes</div>
<div class="a" style="left:1058.00px;top:350px;font-size:11px;">auto</div>
<div class="a" style="left:1px;top:364px;width:1085px;height:14px;background:#b3dffd"></div>
<div class="a" style="left:1px;top:378px;width:1352px;height:1px;background:#d4d0c8"></div>
<div class="a" style="left:120px;top:364px;width:1px;height:14px;background:#d4d0c8"></div>
<div class="a" style="left:145px;top:364px;width:1px;height:14px;background:#d4d0c8"></div>
<div class="a" style="left:345px;top:364px;width:1px;height:14px;background:#d4d0c8"></div>
<div class="a" style="left:420px;top:364px;width:1px;height:14px;background:#d4d0c8"></div>
<div class="a" style="left:455px;top:364px;width:1px;height:14px;background:#d4d0c8"></div>
<div class="a" style="left:525px;top:364px;width:1px;height:14px;background:#d4d0c8"></div>
<div class="a" style="left:565px;top:364px;width:1px;height:14px;background:#d4d0c8"></div>
<div class="a" style="left:600px;top:364px;width:1px;height:14px;background:#d4d0c8"></div>
<div class="a" style="left:670px;top:364px;width:1px;height:14px;background:#d4d0c8"></div>
<div class="a" style="left:710px;top:364px;width:1px;height:14px;background:#d4d0c8"></div>
<div class="a" style="left:735px;top:364px;width:1px;height:14px;background:#d4d0c8"></div>
<div class="a" style="left:785px;top:364px;width:1px;height:14px;background:#d4d0c8"></div>
<div class="a" style="left:835px;top:364px;width:1px;height:14px;background:#d4d0c8"></div>
<div class="a" style="left:890px;top:364px;width:1px;height:14px;background:#d4d0c8"></div>
<div class="a" style="left:955px;top:364px;width:1px;height:14px;background:#d4d0c8"></div>
<div class="a" style="left:1030px;top:364px;width:1px;height:14px;background:#d4d0c8"></div>
<div class="a" style="left:1055px;top:364px;width:1px;height:14px;background:#d4d0c8"></div>
<div class="a" style="left:1085px;top:364px;width:1px;height:14px;background:#d4d0c8"></div>
<div class="a" style="left:3.00px;top:365px;font-size:11px;transform:scaleX(0.8782);transform-origin:0 0;">CHEVROLET TAHOE</div>
<div class="a" style="left:102px;top:373px;width:9px;height:2px;background:repeating-linear-gradient(90deg,#000 0 1px,transparent 1px 4px)"></div>
<div class="a" style="left:136.00px;top:365px;font-size:11px;">7</div>
<div class="a" style="left:148.00px;top:365px;font-size:11px;transform:scaleX(0.9604);transform-origin:0 0;">SUV(Full Size) - Young Driver (age 24</div>
<div class="a" style="left:331px;top:373px;width:9px;height:2px;background:repeating-linear-gradient(90deg,#000 0 1px,transparent 1px 4px)"></div>
<div class="a" style="left:348.00px;top:365px;font-size:11px;transform:scaleX(0.9403);transform-origin:0 0;">Flexible Car</div>
<div class="a" style="left:406px;top:373px;width:9px;height:2px;background:repeating-linear-gradient(90deg,#000 0 1px,transparent 1px 4px)"></div>
<div class="a" style="left:423.00px;top:365px;font-size:11px;transform:scaleX(0.9124);transform-origin:0 0;">Sun</div>
<div class="a" style="left:458.00px;top:365px;font-size:11px;transform:scaleX(1.0103);transform-origin:0 0;">18/06/2017</div>
<div class="a" style="left:528.00px;top:365px;font-size:11px;transform:scaleX(0.9942);transform-origin:0 0;">12:00</div>
<div class="a" style="left:568.00px;top:365px;font-size:11px;transform:scaleX(0.9124);transform-origin:0 0;">Sun</div>
<div class="a" style="left:602.50px;top:365px;font-size:11px;transform:scaleX(1.0103);transform-origin:0 0;">02/07/2017</div>
<div class="a" style="left:673.00px;top:365px;font-size:11px;transform:scaleX(0.9942);transform-origin:0 0;">12:00</div>
<div class="a" style="left:721.50px;top:365px;font-size:11px;transform:scaleX(0.8871);transform-origin:0 0;">14</div>
<div class="a" style="left:738.00px;top:365px;font-size:11px;transform:scaleX(0.9203);transform-origin:0 0;">On Air</div>
<div class="a" style="left:769px;top:373px;width:9px;height:2px;background:repeating-linear-gradient(90deg,#000 0 1px,transparent 1px 4px)"></div>
<div class="a" style="left:788.00px;top:365px;font-size:11px;transform:scaleX(0.9203);transform-origin:0 0;">On Air</div>
<div class="a" style="left:819px;top:373px;width:9px;height:2px;background:repeating-linear-gradient(90deg,#000 0 1px,transparent 1px 4px)"></div>
<div class="a" style="left:853.25px;top:365px;font-size:11px;transform:scaleX(1.0067);transform-origin:0 0;">861.74</div>
<div class="a" style="left:918.25px;top:365px;font-size:11px;transform:scaleX(1.0067);transform-origin:0 0;">861.74</div>
<div class="a" style="left:958.00px;top:365px;font-size:11px;transform:scaleX(0.9256);transform-origin:0 0;">Alamo</div>
<div class="a" style="left:1033.00px;top:365px;font-size:11px;transform:scaleX(0.9366);transform-origin:0 0;">yes</div>
<div class="a" style="left:1058.00px;top:365px;font-size:11px;">auto</div>
<div class="a" style="left:1px;top:379px;width:1085px;height:14px;background:#b3dffd"></div>
<div class="a" style="left:1px;top:393px;width:1352px;height:1px;background:#d4d0c8"></div>
<div class="a" style="left:120px;top:379px;width:1px;height:14px;background:#d4d0c8"></div>
<div class="a" style="left:145px;top:379px;width:1px;height:14px;background:#d4d0c8"></div>
<div class="a" style="left:345px;top:379px;width:1px;height:14px;background:#d4d0c8"></div>
<div class="a" style="left:420px;top:379px;width:1px;height:14px;background:#d4d0c8"></div>
<div class="a" style="left:455px;top:379px;width:1px;height:14px;background:#d4d0c8"></div>
<div class="a" style="left:525px;top:379px;width:1px;height:14px;background:#d4d0c8"></div>
<div class="a" style="left:565px;top:379px;width:1px;height:14px;background:#d4d0c8"></div>
<div class="a" style="left:600px;top:379px;width:1px;height:14px;background:#d4d0c8"></div>
<div class="a" style="left:670px;top:379px;width:1px;height:14px;background:#d4d0c8"></div>
<div class="a" style="left:710px;top:379px;width:1px;height:14px;background:#d4d0c8"></div>
<div class="a" style="left:735px;top:379px;width:1px;height:14px;background:#d4d0c8"></div>
<div class="a" style="left:785px;top:379px;width:1px;height:14px;background:#d4d0c8"></div>
<div class="a" style="left:835px;top:379px;width:1px;height:14px;background:#d4d0c8"></div>
<div class="a" style="left:890px;top:379px;width:1px;height:14px;background:#d4d0c8"></div>
<div class="a" style="left:955px;top:379px;width:1px;height:14px;background:#d4d0c8"></div>
<div class="a" style="left:1030px;top:379px;width:1px;height:14px;background:#d4d0c8"></div>
<div class="a" style="left:1055px;top:379px;width:1px;height:14px;background:#d4d0c8"></div>
<div class="a" style="left:1085px;top:379px;width:1px;height:14px;background:#d4d0c8"></div>
<div class="a" style="left:3.00px;top:380px;font-size:11px;transform:scaleX(0.9088);transform-origin:0 0;">TOYOTA SIENNA OR</div>
<div class="a" style="left:106px;top:388px;width:9px;height:2px;background:repeating-linear-gradient(90deg,#000 0 1px,transparent 1px 4px)"></div>
<div class="a" style="left:136.00px;top:380px;font-size:11px;">8</div>
<div class="a" style="left:148.00px;top:380px;font-size:11px;transform:scaleX(0.9760);transform-origin:0 0;">Van(Standard) - Gold</div>
<div class="a" style="left:348.00px;top:380px;font-size:11px;transform:scaleX(0.9403);transform-origin:0 0;">Flexible Car</div>
<div class="a" style="left:406px;top:388px;width:9px;height:2px;background:repeating-linear-gradient(90deg,#000 0 1px,transparent 1px 4px)"></div>
<div class="a" style="left:423.00px;top:380px;font-size:11px;transform:scaleX(0.9124);transform-origin:0 0;">Sun</div>
<div class="a" style="left:458.00px;top:380px;font-size:11px;transform:scaleX(1.0103);transform-origin:0 0;">18/06/2017</div>
<div class="a" style="left:528.00px;top:380px;font-size:11px;transform:scaleX(0.9942);transform-origin:0 0;">12:00</div>
<div class="a" style="left:568.00px;top:380px;font-size:11px;transform:scaleX(0.9124);transform-origin:0 0;">Sun</div>
<div class="a" style="left:602.50px;top:380px;font-size:11px;transform:scaleX(1.0103);transform-origin:0 0;">02/07/2017</div>
<div class="a" style="left:673.00px;top:380px;font-size:11px;transform:scaleX(0.9942);transform-origin:0 0;">12:00</div>
<div class="a" style="left:721.50px;top:380px;font-size:11px;transform:scaleX(0.8871);transform-origin:0 0;">14</div>
<div class="a" style="left:738.00px;top:380px;font-size:11px;transform:scaleX(0.9203);transform-origin:0 0;">On Air</div>
<div class="a" style="left:769px;top:388px;width:9px;height:2px;background:repeating-linear-gradient(90deg,#000 0 1px,transparent 1px 4px)"></div>
<div class="a" style="left:788.00px;top:380px;font-size:11px;transform:scaleX(0.9203);transform-origin:0 0;">On Air</div>
<div class="a" style="left:819px;top:388px;width:9px;height:2px;background:repeating-linear-gradient(90deg,#000 0 1px,transparent 1px 4px)"></div>
<div class="a" style="left:853.25px;top:380px;font-size:11px;transform:scaleX(1.0067);transform-origin:0 0;">881.40</div>
<div class="a" style="left:918.25px;top:380px;font-size:11px;transform:scaleX(1.0067);transform-origin:0 0;">881.40</div>
<div class="a" style="left:958.00px;top:380px;font-size:11px;transform:scaleX(0.9256);transform-origin:0 0;">Alamo</div>
<div class="a" style="left:1033.00px;top:380px;font-size:11px;transform:scaleX(0.9366);transform-origin:0 0;">yes</div>
<div class="a" style="left:1058.00px;top:380px;font-size:11px;">auto</div>
</div>
<div class="a " style="left:1573px;top:372px;width:16px;height:384px;background:repeating-conic-gradient(#d4d0c8 0 25%,#fff 0 50%) 0 0/2px 2px"></div>
<div class="a raised2" style="left:1573px;top:372px;width:16px;height:16px;"></div>
<svg class="a" style="left:1577px;top:377px" width="8" height="5" viewBox="0 0 8 5"><path d="M0 4 H7 L3.5 0.5Z" fill="#000"/></svg>
<div class="a raised2" style="left:1573px;top:388px;width:16px;height:144px;"></div>
<div class="a raised2" style="left:1573px;top:740px;width:16px;height:16px;"></div>
<svg class="a" style="left:1577px;top:746px" width="8" height="5" viewBox="0 0 8 5"><path d="M0 0 H7 L3.5 3.5Z" fill="#000"/></svg>
<div class="a" style="left:222.20px;top:783px;font-size:11px;transform:scaleX(1.0030);transform-origin:0 0;">First portion: 61.7 sec, total search time: 63.0 sec</div>
<div class="a raised" style="left:1560px;top:778px;width:23px;height:22px;"></div>
<svg class="a" style="left:1568px;top:783px" width="6" height="12" viewBox="0 0 6 12"><circle cx="3.2" cy="1.5" r="1.3" fill="#0a50a8"/><path d="M0.8 4 H4.2 V10 H5.6 V11.2 H0.6 V10 H1.9 V5.2 H0.8Z" fill="#0a50a8"/></svg>
<div class="a " style="left:215px;top:805px;width:1378px;height:1px;background:#808080"></div>
<div class="a " style="left:215px;top:806px;width:52px;height:17px;background:#d4d0c8"></div>
<div class="a" style="left:218.75px;top:807px;font-size:11px;transform:scaleX(0.9041);transform-origin:0 0;">Summary</div>
<div class="a " style="left:268px;top:806px;width:40px;height:17px;background:#d4d0c8"></div>
<div class="a" style="left:270.60px;top:807px;font-size:11px;transform:scaleX(0.9356);transform-origin:0 0;">Search</div>
<div class="a " style="left:309px;top:806px;width:112px;height:17px;background:#ccffcc"></div>
<div class="a" style="left:311.60px;top:807px;font-size:11px;transform:scaleX(0.9244);transform-origin:0 0;">Flt 2A MAN MCO MAN</div>
<div class="a " style="left:421px;top:806px;width:67px;height:17px;background:#c6c6ff"></div>
<div class="a" style="left:423.75px;top:807px;font-size:11px;transform:scaleX(0.9123);transform-origin:0 0;">Acc 2A MCO</div>
<div class="a " style="left:488px;top:805px;width:50px;height:18px;background:#000080;border-radius:3px 3px 0 0"></div>
<div class="a" style="left:490.60px;top:807px;font-size:11px;color:#fff;transform:scaleX(0.9171);transform-origin:0 0;">Car MCO</div>
<div class="a " style="left:538px;top:806px;width:95px;height:17px;background:#d4d0c8"></div>
<div class="a" style="left:541.60px;top:807px;font-size:11px;transform:scaleX(0.9246);transform-origin:0 0;">Financial Summary</div>
<div class="a " style="left:267px;top:806px;width:1px;height:17px;background:#808080"></div>
<div class="a " style="left:308px;top:806px;width:1px;height:17px;background:#808080"></div>
<div class="a " style="left:633px;top:806px;width:1px;height:17px;background:#808080"></div>
<div class="a" style="left:806.60px;top:832px;font-size:11px;transform:scaleX(0.9481);transform-origin:0 0;">User: 446 - Clark Silk</div>
<div class="a" style="left:916.60px;top:832px;font-size:11px;transform:scaleX(0.9710);transform-origin:0 0;">Retailer: 'Ocean-Florida'</div>
<div class="a" style="left:1042.60px;top:832px;font-size:11px;transform:scaleX(0.9729);transform-origin:0 0;">Client: none</div>
<div class="a" style="left:1540.00px;top:832px;font-size:11px;transform:scaleX(0.9132);transform-origin:0 0;">15:10 GMT</div>
<div class="a " style="left:0px;top:858px;width:1600px;height:2px;background:#404040"></div>
</div></body></html>
